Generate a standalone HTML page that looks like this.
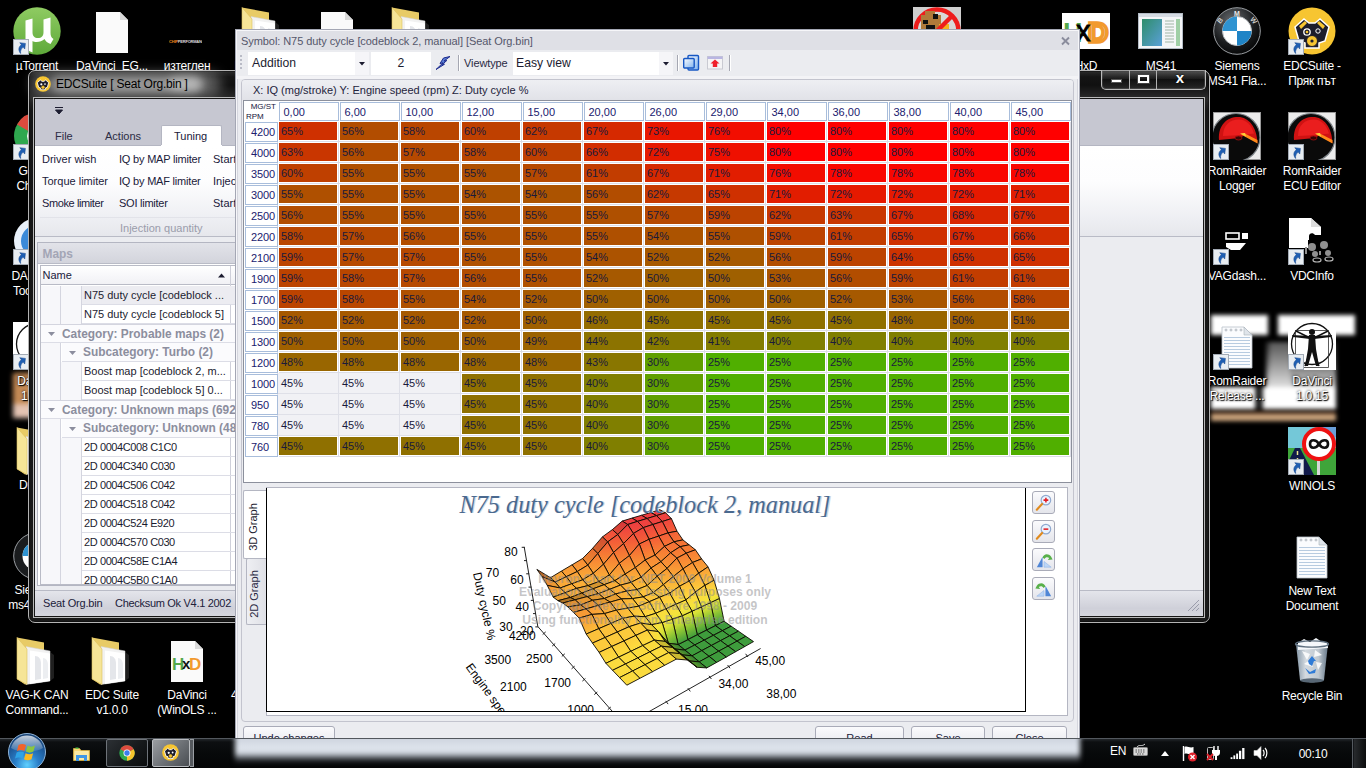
<!DOCTYPE html>
<html lang="en"><head><meta charset="utf-8"><title>EDCSuite - N75 duty cycle</title>
<style>
*{box-sizing:border-box;margin:0;padding:0}
html,body{width:1366px;height:768px;overflow:hidden;background:#000}
body{position:relative;font-family:"Liberation Sans",sans-serif;font-size:11px;color:#1c1c30}
.abs,.ico,.lbl,.win,#dlg,#task,#grid div,#dlg div,.win div,#task div{position:absolute}
svg{position:absolute;overflow:visible}
/* desktop */
.lbl{width:90px;text-align:center;color:#fff;font-size:12px;line-height:15px;letter-spacing:-.25px;text-shadow:1px 1px 1px #000,0 0 3px #000;white-space:nowrap}
.sc{position:absolute;width:12px;height:12px;background:#e9eef3;border:1px solid #9aa3ad}
/* main window */
.win{left:28px;top:70px;width:1182px;height:553px;border-radius:7px;border:1px solid #b4b4b4;background:linear-gradient(#2b2b2b,#141414 6px,#101010 14px,#242424 24px,#2a2a2a 27px,#161616 40px,#1a1a1a);box-shadow:inset 0 0 0 1px rgba(0,0,0,.35)}
.win .client{left:5px;top:27px;width:1170px;height:519px;background:#ebecf0;border:1px solid #161616;box-shadow:0 0 0 1px #b9b9b9;overflow:hidden}
.t11{font-size:11px;white-space:nowrap;color:#20203a}
.trow{left:0;width:440px;height:19px;border-bottom:1px solid #dcdde6;line-height:18px;white-space:nowrap;color:#1c1c30}
.gr{font-weight:bold;color:#8c8e9e;font-size:11.9px}
/* dialog */
#dlg{left:235px;top:29px;width:845px;height:720px;background:#ebecf0;border:1px solid #a4a7b4;box-shadow:inset 0 0 0 1px #f6f6f9,inset 0 0 0 2px #d5d6de}
#grid{position:absolute;left:7px;top:70px;width:829px;height:383px;border:1px solid #8c909c;overflow:hidden;background:repeating-linear-gradient(90deg,transparent 0,transparent 33px,#dcdde6 33px,#dcdde6 34px,transparent 34px,transparent 61px) 0 21px/100% 335px no-repeat,repeating-linear-gradient(180deg,transparent 0,transparent 19px,#dcdde6 19px,#dcdde6 20px,transparent 20px,transparent 21px) 35px 21px/794px 336px no-repeat,#fff}
#grid .ch{top:1px;width:60px;height:19px;border:1px solid #a8bddb;background:#fff;color:#20206e;line-height:18.500px;padding-left:3.500px}
#grid .rh{left:1px;width:33px;height:20px;border:1px solid #a8bddb;background:#fff;color:#20206e;line-height:18.500px;text-align:left;padding-left:5px;letter-spacing:-.15px}
#grid .c{width:58px;height:18px;line-height:19px;padding-left:2px;color:#1a1a3c;white-space:nowrap}
#grid .c.sel{width:61px;height:21px;background:#f1f1f5;border-right:1px solid #dfe0e8;border-bottom:1px solid #dfe0e8;padding-left:3px;line-height:21px}
#grid .corner{left:1px;top:0;width:34px;height:21px;font-size:8px;line-height:9.5px;text-align:right;padding:1px 3px 0 0;color:#15153a}
#grid .corner span{display:block;text-align:left;padding-left:1px}
.btn{border:1px solid #a9abb8;border-radius:3px;background:linear-gradient(#fbfbfd,#e4e5eb);text-align:center;color:#20203a}
.sep{width:1px;background:#a5a7b2;box-shadow:1px 0 0 #fff}
/* taskbar */
#task{left:0;top:738px;width:1366px;height:30px;background:linear-gradient(#23272b,#0d0f11 3px,#07090a 50%,#040506);border-top:1px solid #52575d}
</style></head><body>
<div class="abs" style="left:1208px;top:306px;width:158px;height:124px;overflow:hidden;filter:blur(2.2px)"><div class="abs" style="left:3px;top:9px;width:57px;height:20px;background:#fff"></div><div class="abs" style="left:70px;top:9px;width:77px;height:20px;background:#fff"></div><div class="abs" style="left:58px;top:36px;width:70px;height:46px;background:linear-gradient(#2e2e2e,#6a6a6a 45%,#d9d9d9)"></div><div class="abs" style="left:62px;top:36px;width:20px;height:46px;background:linear-gradient(#555,#e2e2e2)"></div><div class="abs" style="left:3px;top:81px;width:125px;height:22px;background:#fff"></div><div class="abs" style="left:47px;top:81px;width:8px;height:22px;background:#222"></div><div class="abs" style="left:3px;top:105px;width:125px;height:3px;background:#4a2e1c"></div><div class="abs" style="left:3px;top:108px;width:125px;height:7px;background:#caa37c"></div></div>
<div class="abs" style="left:4px;top:366px;width:40px;height:60px;overflow:hidden;filter:blur(2.5px)"><div class="abs" style="left:9px;top:7px;width:30px;height:34px;background:#c48a55"></div><div class="abs" style="left:9px;top:38px;width:30px;height:14px;background:#e3c3b2"></div></div>
<svg style="left:13px;top:7px" width="48" height="48" viewBox="0 0 48 48"><defs><linearGradient id="ut" x1="0" y1="0" x2="0" y2="1"><stop offset="0" stop-color="#8fcb62"/><stop offset="1" stop-color="#5ea93a"/></linearGradient></defs><circle cx="24" cy="24" r="23.700" fill="url(#ut)"/><path d="M12.500 13.500l7-2v13.500c0 4 2 6 5.500 6s5.500-2 5.500-6V12.500l7-2v15c0 3 .5 5 3 6.500l-3 5c-3-1-5-3-6-5-2 2-5 3-8 3-1.500 0-3-.3-4-1v11.500l-7-3z" fill="#fff"/></svg>
<svg style="left:13px;top:39px" width="16" height="16" viewBox="0 0 16 16"><rect x=".5" y=".5" width="15" height="15" fill="#e8edf2" stroke="#a3abb5"/><path d="M4 13c0-4 2-6.5 6-6.5V4l4 4-4 4V9.5C7.5 9.500 5.500 10.500 4 13z" fill="#1f5fb3" stroke="#174a90" stroke-width=".5" transform="rotate(-38 8 8.500)"/></svg>
<div class="lbl" style="left:-8px;top:59px">µTorrent</div>
<svg style="left:88px;top:7px" width="48" height="48" viewBox="0 0 48 48"><path d="M8 5h24l8 8v33H8z" fill="#fafafa"/><path d="M32 5v8h8z" fill="#d9d9d9"/></svg>
<div class="lbl" style="left:67px;top:59px">DaVinci_EG...</div>
<div class="abs" style="left:169px;top:39px;width:33px;height:6px;font-size:4px;line-height:6px;color:#e88b1e;font-weight:bold;letter-spacing:-.2px;white-space:nowrap;overflow:hidden">CHIP<span style="color:#ddd">PERFORMANCE</span></div>
<div class="lbl" style="left:142px;top:59px">изтеглен</div>
<svg style="left:238px;top:7px" width="48" height="48" viewBox="0 0 48 48"><path d="M4 .5L31 5.500V42l-19 5.500L4 42z" fill="#e8cb66"/><path d="M13 9.500l24 4.500v30l-24 3.500z" fill="#f2f2f2" stroke="#d0d0d0" stroke-width=".5"/><path d="M17 13.500l20 3v27.500l-20 3z" fill="#fff"/><path d="M22 19c4 0 6 3 6 8v15l-6 1z" fill="#e4e6ea"/><path d="M30 21c3 0 5 3 5 7v13l-5 1z" fill="#eceef1"/><path d="M4 .5l10 11.500v35.500L4 42z" fill="#f6e597" stroke="#dcc05c" stroke-width=".6"/><path d="M37 15l4 3v23l-4 3z" fill="#444" opacity=".45"/></svg>
<div class="lbl" style="left:217px;top:59px">New folder</div>
<svg style="left:313px;top:7px" width="48" height="48" viewBox="0 0 48 48"><path d="M8 5h24l8 8v33H8z" fill="#fafafa"/><path d="M32 5v8h8z" fill="#d9d9d9"/></svg>
<div class="lbl" style="left:292px;top:59px">dump.bin</div>
<svg style="left:388px;top:7px" width="48" height="48" viewBox="0 0 48 48"><path d="M4 .5L31 5.500V42l-19 5.500L4 42z" fill="#e8cb66"/><path d="M13 9.500l24 4.500v30l-24 3.500z" fill="#f2f2f2" stroke="#d0d0d0" stroke-width=".5"/><path d="M17 13.500l20 3v27.500l-20 3z" fill="#fff"/><path d="M22 19c4 0 6 3 6 8v15l-6 1z" fill="#e4e6ea"/><path d="M30 21c3 0 5 3 5 7v13l-5 1z" fill="#eceef1"/><path d="M4 .5l10 11.500v35.500L4 42z" fill="#f6e597" stroke="#dcc05c" stroke-width=".6"/><path d="M37 15l4 3v23l-4 3z" fill="#444" opacity=".45"/></svg>
<div class="lbl" style="left:367px;top:59px">Maps</div>
<svg style="left:913px;top:7px" width="48" height="48" viewBox="0 0 48 48"><rect width="48" height="48" fill="#cfcfcf"/><circle cx="24" cy="24" r="21.500" fill="#d8d8d8" stroke="#ee1c1c" stroke-width="4.500"/><rect x="8" y="8" width="20" height="18" fill="#b07a3a"/><rect x="12" y="4" width="10" height="6" fill="#b07a3a"/><rect x="20" y="7" width="5" height="5" fill="#111"/><rect x="10" y="13" width="5" height="4" fill="#111"/><rect x="13" y="18" width="9" height="4" fill="#111"/><rect x="26" y="17" width="10" height="8" fill="#f4b21e"/><path d="M8 40L40 8" stroke="#ee1c1c" stroke-width="4.500"/></svg>
<svg style="left:1062px;top:7px" width="48" height="48" viewBox="0 0 48 48"><rect y="6" width="48" height="36" fill="#fff"/><text x="1" y="35" font-family="Liberation Sans,sans-serif" font-size="27" font-weight="bold" fill="#55a84a">H</text><text x="26" y="35" font-family="Liberation Sans,sans-serif" font-size="28" font-weight="bold" fill="#d8d8d8" stroke="#f29a2e" stroke-width="3.500">D</text><text x="14" y="34" font-family="Liberation Sans,sans-serif" font-size="29" fill="#000" stroke="#000" stroke-width=".8">x</text></svg>
<div class="lbl" style="left:1041px;top:59px">HxD</div>
<svg style="left:1137px;top:7px" width="48" height="48" viewBox="0 0 48 48"><defs><linearGradient id="ms" x1="0" y1="0" x2="1" y2="1"><stop offset="0" stop-color="#2e8d6a"/><stop offset="1" stop-color="#5aa0d8"/></linearGradient></defs><rect x="1.500" y="6.500" width="44" height="35" fill="#f4f6f8" stroke="#b4bcc6"/><rect x="2" y="7" width="43" height="3" fill="#d5dbe3"/><rect x="5" y="12" width="20" height="27" fill="url(#ms)"/><g stroke="#9fb6a6" stroke-width="1.200"><path d="M28 14h9M28 17h9M28 20h9M28 23h9M28 26h9M28 29h9M28 32h9M28 35h9"/></g><rect x="39" y="12" width="4" height="27" fill="#9fcfa6"/></svg>
<div class="lbl" style="left:1116px;top:59px">MS41</div>
<svg style="left:1213px;top:7px" width="48" height="48" viewBox="0 0 48 48"><defs><radialGradient id="bm" cx=".4" cy=".3" r=".8"><stop offset="0" stop-color="#6a6e72"/><stop offset=".6" stop-color="#1a1c1e"/><stop offset="1" stop-color="#000"/></radialGradient></defs><circle cx="24" cy="24" r="23.300" fill="url(#bm)" stroke="#9a9ea2" stroke-width="1"/><circle cx="24" cy="24" r="14.500" fill="#fff" stroke="#b9bdc1" stroke-width="1"/><path d="M24 24V9.500A14.500 14.500 0 0 0 9.500 24z" fill="#2f93d1"/><path d="M24 24v14.500A14.500 14.500 0 0 0 38.500 24z" fill="#1f84c6"/><text x="24" y="9" text-anchor="middle" font-family="Liberation Sans,sans-serif" font-size="7" font-weight="bold" fill="#e8e8e8">M</text><text x="9" y="15" text-anchor="middle" font-family="Liberation Sans,sans-serif" font-size="7" font-weight="bold" fill="#d0d0d0" transform="rotate(-50 9 15)">B</text><text x="39" y="15" text-anchor="middle" font-family="Liberation Sans,sans-serif" font-size="7" font-weight="bold" fill="#d0d0d0" transform="rotate(50 39 15)">W</text></svg>
<div class="lbl" style="left:1192px;top:59px">Siemens</div>
<div class="lbl" style="left:1192px;top:74px">MS41 Fla...</div>
<svg style="left:1288px;top:7px" width="48" height="48" viewBox="0 0 48 48"><circle cx="24" cy="24" r="23.500" fill="#f7c531"/><path d="M7 20l9-8 5 4h6l5-4 9 8-4 14-6 2v5H17v-5l-6-2z" fill="#1d1d2b" stroke="#fff" stroke-width="1.500"/><path d="M11 19l6-5 2 2-6 6zM37 19l-6-5-2 2 6 6z" fill="#f7c531"/><circle cx="19" cy="25" r="3.200" fill="#1d1d2b" stroke="#fff" stroke-width="1.300"/><circle cx="19" cy="25" r="1.300" fill="#f7c531"/><circle cx="30" cy="24" r="2.200" fill="#1d1d2b" stroke="#fff" stroke-width="1"/><circle cx="24" cy="34" r="5.500" fill="#f7c531" stroke="#1d1d2b" stroke-width="1"/><circle cx="24" cy="34" r="1.600" fill="#1d1d2b"/></svg>
<svg style="left:1288px;top:39px" width="16" height="16" viewBox="0 0 16 16"><rect x=".5" y=".5" width="15" height="15" fill="#e8edf2" stroke="#a3abb5"/><path d="M4 13c0-4 2-6.5 6-6.5V4l4 4-4 4V9.5C7.5 9.500 5.500 10.500 4 13z" fill="#1f5fb3" stroke="#174a90" stroke-width=".5" transform="rotate(-38 8 8.500)"/></svg>
<div class="lbl" style="left:1267px;top:59px">EDCSuite -</div>
<div class="lbl" style="left:1267px;top:74px">Пряк път</div>
<svg style="left:1213px;top:112px;overflow:hidden" width="48" height="48" viewBox="0 0 48 48"><rect x=".5" y=".5" width="47" height="47" fill="#ececec" stroke="#9a9a9a"/><circle cx="23" cy="25.500" r="24" fill="#0a0a0a" stroke="#7d8388" stroke-width="1.200"/><path d="M6 28C5 13 14 5 25 5c11 0 19 10.500 19.500 26L31 23.500 27 26z" fill="#cf1212"/><path d="M10 24C10 13 17 7.500 26 7.500c7 0 12.500 5.500 15 14l-12 1.500z" fill="#f02222" opacity=".8"/><path d="M28 22.500l16.500 9v-3.500L31 21z" fill="#ff8a1a"/><path d="M27 21.500l6 3-1-3.500z" fill="#ffd23a"/><ellipse cx="25.500" cy="26" rx="3.500" ry="2" fill="#3a0505" stroke="#a01010" stroke-width=".8"/></svg>
<svg style="left:1213px;top:144px" width="16" height="16" viewBox="0 0 16 16"><rect x=".5" y=".5" width="15" height="15" fill="#e8edf2" stroke="#a3abb5"/><path d="M4 13c0-4 2-6.5 6-6.5V4l4 4-4 4V9.5C7.5 9.500 5.500 10.500 4 13z" fill="#1f5fb3" stroke="#174a90" stroke-width=".5" transform="rotate(-38 8 8.500)"/></svg>
<div class="lbl" style="left:1192px;top:164px">RomRaider</div>
<div class="lbl" style="left:1192px;top:179px">Logger</div>
<svg style="left:1288px;top:112px;overflow:hidden" width="48" height="48" viewBox="0 0 48 48"><rect x=".5" y=".5" width="47" height="47" fill="#ececec" stroke="#9a9a9a"/><circle cx="23" cy="25.500" r="24" fill="#0a0a0a" stroke="#7d8388" stroke-width="1.200"/><path d="M6 28C5 13 14 5 25 5c11 0 19 10.500 19.500 26L31 23.500 27 26z" fill="#cf1212"/><path d="M10 24C10 13 17 7.500 26 7.500c7 0 12.500 5.500 15 14l-12 1.500z" fill="#f02222" opacity=".8"/><path d="M28 22.500l16.500 9v-3.500L31 21z" fill="#ff8a1a"/><path d="M27 21.500l6 3-1-3.500z" fill="#ffd23a"/><ellipse cx="25.500" cy="26" rx="3.500" ry="2" fill="#3a0505" stroke="#a01010" stroke-width=".8"/></svg>
<svg style="left:1288px;top:144px" width="16" height="16" viewBox="0 0 16 16"><rect x=".5" y=".5" width="15" height="15" fill="#e8edf2" stroke="#a3abb5"/><path d="M4 13c0-4 2-6.5 6-6.5V4l4 4-4 4V9.5C7.5 9.500 5.500 10.500 4 13z" fill="#1f5fb3" stroke="#174a90" stroke-width=".5" transform="rotate(-38 8 8.500)"/></svg>
<div class="lbl" style="left:1267px;top:164px">RomRaider</div>
<div class="lbl" style="left:1267px;top:179px">ECU Editor</div>
<svg style="left:1213px;top:217px" width="48" height="48" viewBox="0 0 48 48"><rect x="13" y="16" width="13" height="6" fill="none" stroke="#fff" stroke-width="1.600"/><rect x="29" y="16" width="6" height="6" fill="#fff"/><path d="M13 26h20l-6 7h-9l-5-3z" fill="#fff"/></svg>
<svg style="left:1213px;top:249px" width="16" height="16" viewBox="0 0 16 16"><rect x=".5" y=".5" width="15" height="15" fill="#e8edf2" stroke="#a3abb5"/><path d="M4 13c0-4 2-6.5 6-6.5V4l4 4-4 4V9.5C7.5 9.500 5.500 10.500 4 13z" fill="#1f5fb3" stroke="#174a90" stroke-width=".5" transform="rotate(-38 8 8.500)"/></svg>
<div class="lbl" style="left:1192px;top:269px">VAGdash...</div>
<svg style="left:1288px;top:217px" width="48" height="48" viewBox="0 0 48 48"><path d="M1 1h22l10 9v8h-6c-2-3-6-2-6 1v4h-8c1 4-4 6-5 2H1z" fill="#fff"/><path d="M23 1v9h10z" fill="#ddd"/><path d="M1 20h6c1 4 6 3 5-1h8v12H1z" fill="#fff"/><g fill="#8f8f8f"><circle cx="24" cy="30" r="4"/><circle cx="36" cy="28" r="4"/><circle cx="27" cy="37" r="3"/><circle cx="40" cy="36" r="3"/><rect x="17" y="30" width="2" height="7"/><rect x="31" y="34" width="2" height="4"/></g><ellipse cx="29" cy="43" rx="4" ry="2" fill="none" stroke="#bbb" stroke-width="1.200"/><ellipse cx="41" cy="42" rx="4" ry="2" fill="none" stroke="#bbb" stroke-width="1.200"/></svg>
<svg style="left:1288px;top:249px" width="16" height="16" viewBox="0 0 16 16"><rect x=".5" y=".5" width="15" height="15" fill="#e8edf2" stroke="#a3abb5"/><path d="M4 13c0-4 2-6.5 6-6.5V4l4 4-4 4V9.5C7.5 9.500 5.500 10.500 4 13z" fill="#1f5fb3" stroke="#174a90" stroke-width=".5" transform="rotate(-38 8 8.500)"/></svg>
<div class="lbl" style="left:1267px;top:269px">VDCInfo</div>
<svg style="left:1213px;top:322px" width="48" height="48" viewBox="0 0 48 48"><path d="M9 5h22l8 8v33H9z" fill="#fbfcfe" stroke="#b9c0c9" stroke-width=".8"/><path d="M31 5v8h8z" fill="#dfe4ea" stroke="#aab1ba" stroke-width=".6"/><g stroke="#b7cbe0" stroke-width="1"><path d="M11 15.500h26M11 18.500h26M11 21.500h26M11 24.500h26M11 27.500h26M11 30.500h26M11 33.500h26M11 36.500h26M11 39.500h26M11 42.500h26"/></g><g fill="none" stroke="#9aa2ac" stroke-width=".7"><circle cx="13" cy="8" r="1"/><circle cx="18" cy="8" r="1"/><circle cx="23" cy="8" r="1"/><circle cx="28" cy="8" r="1"/></g></svg>
<svg style="left:1213px;top:354px" width="16" height="16" viewBox="0 0 16 16"><rect x=".5" y=".5" width="15" height="15" fill="#e8edf2" stroke="#a3abb5"/><path d="M4 13c0-4 2-6.5 6-6.5V4l4 4-4 4V9.5C7.5 9.500 5.500 10.500 4 13z" fill="#1f5fb3" stroke="#174a90" stroke-width=".5" transform="rotate(-38 8 8.500)"/></svg>
<div class="lbl" style="left:1192px;top:374px">RomRaider</div>
<div class="lbl" style="left:1192px;top:389px">Release ...</div>
<svg style="left:1288px;top:322px" width="48" height="48" viewBox="0 0 48 48"><rect width="48" height="48" fill="#fff"/><circle cx="24" cy="22" r="20.500" fill="none" stroke="#111" stroke-width="1.300"/><rect x="7.500" y="8.500" width="33" height="37" fill="none" stroke="#333" stroke-width=".8"/><circle cx="24" cy="10" r="3" fill="#111"/><path d="M21 13h6l1 14 3 17h-3l-4-14-4 14h-3l3-17z" fill="#111"/><path d="M4 13l18 1v3L5 15zM44 13l-18 1v3l17-2z" fill="#111"/><path d="M8 9l14 7M40 9l-14 7M17 44l5-14M31 44l-5-14" stroke="#111" stroke-width="1.500" fill="none"/></svg>
<svg style="left:1288px;top:354px" width="16" height="16" viewBox="0 0 16 16"><rect x=".5" y=".5" width="15" height="15" fill="#e8edf2" stroke="#a3abb5"/><path d="M4 13c0-4 2-6.5 6-6.5V4l4 4-4 4V9.5C7.5 9.500 5.500 10.500 4 13z" fill="#1f5fb3" stroke="#174a90" stroke-width=".5" transform="rotate(-38 8 8.500)"/></svg>
<div class="lbl" style="left:1267px;top:374px">DaVinci</div>
<div class="lbl" style="left:1267px;top:389px">1.0.15</div>
<svg style="left:1288px;top:427px;overflow:hidden" width="48" height="48" viewBox="0 0 48 48"><rect width="48" height="22" fill="#74c8d8"/><rect x="30" width="18" height="10" fill="#6a9fd8"/><rect y="21" width="48" height="27" fill="#3fa53a"/><path d="M7 21h5l14 27H-6z" fill="#111a4a"/><path d="M9.500 24v4M9.500 31v5" stroke="#f0e68c" stroke-width="1.500"/><rect x="29" y="32" width="3" height="16" fill="#d8d8d8"/><circle cx="31" cy="17" r="15" fill="#fff" stroke="#ee1111" stroke-width="4"/><path d="M31 17c-3-5-9-5-9 0s6 5 9 0c3-5 9-5 9 0s-6 5-9 0z" fill="none" stroke="#111" stroke-width="2.600"/></svg>
<svg style="left:1288px;top:459px" width="16" height="16" viewBox="0 0 16 16"><rect x=".5" y=".5" width="15" height="15" fill="#e8edf2" stroke="#a3abb5"/><path d="M4 13c0-4 2-6.5 6-6.5V4l4 4-4 4V9.5C7.5 9.500 5.500 10.500 4 13z" fill="#1f5fb3" stroke="#174a90" stroke-width=".5" transform="rotate(-38 8 8.500)"/></svg>
<div class="lbl" style="left:1267px;top:479px">WINOLS</div>
<svg style="left:1288px;top:532px" width="48" height="48" viewBox="0 0 48 48"><path d="M9 5h22l8 8v33H9z" fill="#fbfcfe" stroke="#b9c0c9" stroke-width=".8"/><path d="M31 5v8h8z" fill="#dfe4ea" stroke="#aab1ba" stroke-width=".6"/><g stroke="#b7cbe0" stroke-width="1"><path d="M11 15.500h26M11 18.500h26M11 21.500h26M11 24.500h26M11 27.500h26M11 30.500h26M11 33.500h26M11 36.500h26M11 39.500h26M11 42.500h26"/></g><g fill="none" stroke="#9aa2ac" stroke-width=".7"><circle cx="13" cy="8" r="1"/><circle cx="18" cy="8" r="1"/><circle cx="23" cy="8" r="1"/><circle cx="28" cy="8" r="1"/></g></svg>
<div class="lbl" style="left:1267px;top:584px">New Text</div>
<div class="lbl" style="left:1267px;top:599px">Document</div>
<svg style="left:1288px;top:637px" width="48" height="48" viewBox="0 0 48 48"><defs><linearGradient id="rb" x1="0" y1="0" x2="1" y2="0"><stop offset="0" stop-color="#8fa3b5"/><stop offset=".3" stop-color="#e6edf3"/><stop offset=".7" stop-color="#cfd9e2"/><stop offset="1" stop-color="#6f8294"/></linearGradient></defs><path d="M8 7h32l-4 36c-4 3-20 3-24 0z" fill="url(#rb)" opacity=".92"/><path d="M10 6l6-4 6 3 6-4 6 4 5 0 1 6-30 2z" fill="#f5f8fb"/><ellipse cx="24" cy="7" rx="16.500" ry="3.200" fill="none" stroke="#5d6e7e" stroke-width="1.300"/><path d="M14 14l8 3-3 6zM27 13l7 5-8 2zM16 27l6-4 3 7zM28 25l6 1-4 7z" fill="#fff" opacity=".85"/><path d="M20 24l4-5 4 5-2 0-2 5-3-2zM17 31l5 4 6-3-1 4-6 1z" fill="#2f7bd6"/><ellipse cx="24" cy="43.500" rx="12" ry="2.200" fill="#586775"/></svg>
<div class="lbl" style="left:1267px;top:689px">Recycle Bin</div>
<svg style="left:13px;top:112px" width="48" height="48" viewBox="0 0 48 48"><circle cx="24" cy="24" r="23" fill="#2fa84f"/><path d="M24 24L4 12.500A23 23 0 0 1 44 12.500z" fill="#dd4b3e"/><path d="M24 24l20-11.500A23 23 0 0 1 24 47z" fill="#f7c52d"/><circle cx="24" cy="24" r="10" fill="#fff"/><circle cx="24" cy="24" r="8" fill="#3b7ded"/></svg>
<svg style="left:13px;top:144px" width="16" height="16" viewBox="0 0 16 16"><rect x=".5" y=".5" width="15" height="15" fill="#e8edf2" stroke="#a3abb5"/><path d="M4 13c0-4 2-6.5 6-6.5V4l4 4-4 4V9.5C7.5 9.500 5.500 10.500 4 13z" fill="#1f5fb3" stroke="#174a90" stroke-width=".5" transform="rotate(-38 8 8.500)"/></svg>
<div class="lbl" style="left:-8px;top:164px">Google</div>
<div class="lbl" style="left:-8px;top:179px">Chrome</div>
<svg style="left:13px;top:217px" width="48" height="48" viewBox="0 0 48 48"><circle cx="24" cy="24" r="23" fill="#e9f1fa"/><circle cx="24" cy="24" r="16" fill="#3b8ad8"/><path d="M22 6l10 16h-8l4 18-12-20h8z" fill="#fff"/></svg>
<svg style="left:13px;top:249px" width="16" height="16" viewBox="0 0 16 16"><rect x=".5" y=".5" width="15" height="15" fill="#e8edf2" stroke="#a3abb5"/><path d="M4 13c0-4 2-6.5 6-6.5V4l4 4-4 4V9.5C7.5 9.500 5.500 10.500 4 13z" fill="#1f5fb3" stroke="#174a90" stroke-width=".5" transform="rotate(-38 8 8.500)"/></svg>
<div class="lbl" style="left:-8px;top:269px">DAEMON</div>
<div class="lbl" style="left:-8px;top:284px">Tools Lite</div>
<svg style="left:13px;top:322px" width="48" height="48" viewBox="0 0 48 48"><rect width="48" height="48" fill="#fff"/><circle cx="24" cy="22" r="20.500" fill="none" stroke="#111" stroke-width="1.300"/><path d="M21 13h6l1 14 3 17h-3l-4-14-4 14h-3l3-17z" fill="#111"/></svg>
<svg style="left:13px;top:354px" width="16" height="16" viewBox="0 0 16 16"><rect x=".5" y=".5" width="15" height="15" fill="#e8edf2" stroke="#a3abb5"/><path d="M4 13c0-4 2-6.5 6-6.5V4l4 4-4 4V9.5C7.5 9.500 5.500 10.500 4 13z" fill="#1f5fb3" stroke="#174a90" stroke-width=".5" transform="rotate(-38 8 8.500)"/></svg>
<div class="lbl" style="left:-8px;top:374px">DaVinci</div>
<div class="lbl" style="left:-8px;top:389px">1.0.10</div>
<svg style="left:13px;top:427px" width="48" height="48" viewBox="0 0 48 48"><path d="M4 .5L31 5.500V42l-19 5.500L4 42z" fill="#e8cb66"/><path d="M13 9.500l24 4.500v30l-24 3.500z" fill="#f2f2f2" stroke="#d0d0d0" stroke-width=".5"/><path d="M17 13.500l20 3v27.500l-20 3z" fill="#fff"/><path d="M22 19c4 0 6 3 6 8v15l-6 1z" fill="#e4e6ea"/><path d="M30 21c3 0 5 3 5 7v13l-5 1z" fill="#eceef1"/><path d="M4 .5l10 11.500v35.500L4 42z" fill="#f6e597" stroke="#dcc05c" stroke-width=".6"/><path d="M37 15l4 3v23l-4 3z" fill="#444" opacity=".45"/></svg>
<div class="lbl" style="left:-8px;top:478px">Drivers</div>
<svg style="left:13px;top:532px" width="48" height="48" viewBox="0 0 48 48"><circle cx="24" cy="24" r="23.300" fill="#1a1c1e" stroke="#9a9ea2"/><circle cx="24" cy="24" r="14.500" fill="#fff"/><path d="M24 24V9.500A14.500 14.500 0 0 0 9.500 24z" fill="#2f93d1"/><path d="M24 24v14.500A14.500 14.500 0 0 0 38.500 24z" fill="#1f84c6"/></svg>
<div class="lbl" style="left:-8px;top:583px">Siemens</div>
<div class="lbl" style="left:-8px;top:598px">ms41 rea...</div>
<svg style="left:13px;top:637px" width="48" height="48" viewBox="0 0 48 48"><path d="M4 .5L31 5.500V42l-19 5.500L4 42z" fill="#e8cb66"/><path d="M13 9.500l24 4.500v30l-24 3.500z" fill="#f2f2f2" stroke="#d0d0d0" stroke-width=".5"/><path d="M17 13.500l20 3v27.500l-20 3z" fill="#fff"/><path d="M22 19c4 0 6 3 6 8v15l-6 1z" fill="#e4e6ea"/><path d="M30 21c3 0 5 3 5 7v13l-5 1z" fill="#eceef1"/><path d="M4 .5l10 11.500v35.500L4 42z" fill="#f6e597" stroke="#dcc05c" stroke-width=".6"/><path d="M37 15l4 3v23l-4 3z" fill="#444" opacity=".45"/></svg>
<div class="lbl" style="left:-8px;top:688px">VAG-K CAN</div>
<div class="lbl" style="left:-8px;top:703px">Command...</div>
<svg style="left:88px;top:637px" width="48" height="48" viewBox="0 0 48 48"><path d="M4 .5L31 5.500V42l-19 5.500L4 42z" fill="#e8cb66"/><path d="M13 9.500l24 4.500v30l-24 3.500z" fill="#f2f2f2" stroke="#d0d0d0" stroke-width=".5"/><path d="M17 13.500l20 3v27.500l-20 3z" fill="#fff"/><path d="M22 19c4 0 6 3 6 8v15l-6 1z" fill="#e4e6ea"/><path d="M30 21c3 0 5 3 5 7v13l-5 1z" fill="#eceef1"/><path d="M4 .5l10 11.500v35.500L4 42z" fill="#f6e597" stroke="#dcc05c" stroke-width=".6"/><path d="M37 15l4 3v23l-4 3z" fill="#444" opacity=".45"/></svg>
<div class="lbl" style="left:67px;top:688px">EDC Suite</div>
<div class="lbl" style="left:67px;top:703px">v1.0.0</div>
<svg style="left:163px;top:637px" width="48" height="48" viewBox="0 0 48 48"><path d="M8 4h24l8 8v33H8z" fill="#fafafa"/><path d="M32 4v8h8z" fill="#d9d9d9"/><text x="9" y="33" font-family="Liberation Sans,sans-serif" font-size="17" font-weight="bold" fill="#55a84a">H</text><text x="19" y="32" font-family="Liberation Sans,sans-serif" font-size="15" font-weight="bold" fill="#111">x</text><text x="26" y="33" font-family="Liberation Sans,sans-serif" font-size="17" font-weight="bold" fill="#f29a2e">D</text></svg>
<div class="lbl" style="left:142px;top:688px">DaVinci</div>
<div class="lbl" style="left:142px;top:703px">(WinOLS ...</div>
<div class="lbl" style="left:231px;top:688px;text-align:left">4.51 Tuning</div>
<div class="win">
 <!-- glass glow behind title -->
 <div style="left:2px;top:1px;width:190px;height:24px;border-radius:12px;background:rgba(255,255,255,.3);filter:blur(6px)"></div><div style="left:22px;top:5px;width:150px;height:17px;border-radius:9px;background:rgba(255,255,255,.38);filter:blur(4px)"></div><div style="left:140px;top:5px;width:36px;height:15px;border-radius:8px;background:rgba(255,255,255,.3);filter:blur(4px)"></div>
 <svg style="left:6px;top:5px" width="16" height="16" viewBox="0 0 48 48"><circle cx="24" cy="24" r="23.500" fill="#f7c531"/><path d="M7 20l9-8 5 4h6l5-4 9 8-4 14-6 2v5H17v-5l-6-2z" fill="#1d1d2b" stroke="#fff" stroke-width="2.500"/><circle cx="19" cy="25" r="3.200" fill="#fff"/><circle cx="30" cy="24" r="2.600" fill="#fff"/><circle cx="24" cy="34" r="5.500" fill="#f7c531" stroke="#1d1d2b" stroke-width="1"/></svg>
 <div style="left:27px;top:5px;font-size:12px;line-height:16px;color:#000;letter-spacing:-.2px;white-space:nowrap">EDCSuite [ Seat Org.bin ]</div>
 <!-- caption buttons -->
 <div style="left:1072px;top:-1px;width:105px;height:20px;border:1px solid #b9b9b9;border-top:none;border-radius:0 0 5px 5px;background:linear-gradient(rgba(120,120,120,.55),rgba(40,40,40,.5) 45%,rgba(15,15,15,.6) 50%,rgba(60,60,60,.5));box-shadow:inset 0 0 0 1px rgba(255,255,255,.12)">
  <div style="left:27px;top:0;width:1px;height:19px;background:#b0b0b0"></div>
  <div style="left:54px;top:0;width:1px;height:19px;background:#b0b0b0"></div>
  <div style="left:9px;top:9px;width:11px;height:4px;background:#fff;border:1px solid #555"></div>
  <div style="left:36px;top:5px;width:11px;height:8px;border:2px solid #fff;box-shadow:0 0 0 1px #444"></div>
  <div style="left:69px;top:-1px;width:18px;font:bold 15px/17px 'Liberation Sans',sans-serif;color:#fff;text-shadow:0 0 2px #000;text-align:center">x</div>
 </div>
 <div class="client"><div style="left:1px;top:-1px;width:1167px;height:518px">
  <!-- QAT + tabs strip -->
  <div style="left:-1px;top:0;width:1169px;height:47px;background:#c6c7d1"></div>
  <svg style="left:18px;top:9px" width="10" height="8" viewBox="0 0 10 8"><path d="M1 .5h8M1.500 3h7L5 7z" stroke="#1c1c30" stroke-width="1" fill="#1c1c30"/></svg>
  <div class="t11" style="left:19px;top:32px;color:#2c2c44">File</div>
  <div class="t11" style="left:69px;top:32px;color:#2c2c44">Actions</div>
  <div style="left:125px;top:27px;width:61px;height:21px;background:#fff;border:1px solid #b4b6c2;border-bottom:none;border-radius:2px 2px 0 0"></div>
  <div class="t11" style="left:138px;top:32px">Tuning</div>
  <!-- ribbon panel -->
  <div style="left:-1px;top:47px;width:1169px;height:92px;background:linear-gradient(#fff,#fdfdfe 40%,#eeeff3 80%,#e6e7ec);border-top:1px solid #b4b6c2;border-bottom:1px solid #b9bbc6"></div>
  <div style="left:125px;top:47px;width:61px;height:1px;background:#fff"></div>
  <div class="t11" style="left:6px;top:55px">Driver wish</div>
  <div class="t11" style="left:6px;top:77px">Torque limiter</div>
  <div class="t11" style="left:6px;top:99px;letter-spacing:-.4px">Smoke limiter</div>
  <div class="t11" style="left:83px;top:55px;letter-spacing:-.2px">IQ by MAP limiter</div>
  <div class="t11" style="left:83px;top:77px;letter-spacing:-.2px">IQ by MAF limiter</div>
  <div class="t11" style="left:83px;top:99px;letter-spacing:-.25px">SOI limiter</div>
  <div class="t11" style="left:177px;top:55px">Start of injection</div>
  <div class="t11" style="left:177px;top:77px">Injector duration</div>
  <div class="t11" style="left:177px;top:99px">Start of injection limiter</div>
  <div style="left:4px;top:119px;width:330px;height:1px;background:#e2e3e9"></div>
  <div class="t11" style="left:84px;top:124px;color:#9a9cab">Injection quantity</div>
  <!-- Maps dock panel -->
  <div style="left:1px;top:144px;width:453px;height:344px;border:1px solid #b4b6c2;background:#fff"></div>
  <div style="left:2px;top:145px;width:451px;height:21px;background:linear-gradient(#e2e3e9,#d3d4dc);border-bottom:1px solid #b9bbc6"></div>
  <div style="left:6.500px;top:149px;font-weight:bold;font-size:11.900px;color:#a3a5b5;white-space:nowrap">Maps</div>
  <div style="left:4px;top:167px;width:447px;height:320px;border:1px solid #b9bbc6;background:#fff;overflow:hidden">
   <div style="left:0;top:0;width:446px;height:19px;background:linear-gradient(#fff,#f1f1f5);border-bottom:1px solid #b9bbc6"></div>
   <div class="t11" style="left:1.500px;top:3px">Name</div>
   <svg style="left:177px;top:7px" width="7" height="5" viewBox="0 0 7 5"><path d="M0 4.500L3.500 .5 7 4.500z" fill="#1c1c30"/></svg>
   <div style="left:189px;top:0;width:1px;height:420px;background:#cfd0da"></div>
   <!-- rows: origin y=20 => screen 285 -->
   <div style="left:0;top:20px;width:20px;height:38px;border-right:1px solid #d4d5df;background:#f7f7fa"></div>
   <div style="left:20px;top:20px;width:21px;height:38px;border-right:1px solid #d4d5df;background:#f7f7fa"></div>
   <div class="trow" style="left:41px;top:20px;background:#ececf1;padding-left:2px">N75 duty cycle [codeblock ...</div>
   <div class="trow" style="left:41px;top:39px;padding-left:2px">N75 duty cycle [codeblock 5]</div>
   <div class="trow gr" style="top:58px;padding-left:21px;border-top:1px solid #d4d5df;background:#fbfbfd">Category: Probable maps (2)</div>
   <svg style="left:7px;top:66px" width="7" height="4" viewBox="0 0 7 4"><path d="M0 0h7L3.500 4z" fill="#8c8e9e"/></svg>
   <div style="left:0;top:77px;width:20px;height:57px;border-right:1px solid #d4d5df;background:#f7f7fa"></div>
   <div class="trow gr" style="left:21px;top:77px;padding-left:21px;background:#fbfbfd">Subcategory: Turbo (2)</div>
   <svg style="left:28px;top:85px" width="7" height="4" viewBox="0 0 7 4"><path d="M0 0h7L3.500 4z" fill="#8c8e9e"/></svg>
   <div style="left:20px;top:96px;width:21px;height:38px;border-right:1px solid #d4d5df;background:#f7f7fa"></div>
   <div class="trow" style="left:41px;top:96px;padding-left:2px">Boost map [codeblock 2, m...</div>
   <div class="trow" style="left:41px;top:115px;padding-left:2px">Boost map [codeblock 5] 0...</div>
   <div class="trow gr" style="top:134px;padding-left:21px;border-top:1px solid #d4d5df;background:#fbfbfd">Category: Unknown maps (692)</div>
   <svg style="left:7px;top:142px" width="7" height="4" viewBox="0 0 7 4"><path d="M0 0h7L3.500 4z" fill="#8c8e9e"/></svg>
   <div style="left:0;top:153px;width:20px;height:270px;border-right:1px solid #d4d5df;background:#f7f7fa"></div>
   <div class="trow gr" style="left:21px;top:153px;padding-left:21px;background:#fbfbfd">Subcategory: Unknown (486)</div>
   <svg style="left:28px;top:161px" width="7" height="4" viewBox="0 0 7 4"><path d="M0 0h7L3.500 4z" fill="#8c8e9e"/></svg>
   <div style="left:20px;top:172px;width:21px;height:250px;border-right:1px solid #d4d5df;background:#f7f7fa"></div>
   <div class="trow" style="left:41px;top:172px;padding-left:2px;letter-spacing:-.4px">2D 0004C008 C1C0</div>
   <div class="trow" style="left:41px;top:191px;padding-left:2px;letter-spacing:-.4px">2D 0004C340 C030</div>
   <div class="trow" style="left:41px;top:210px;padding-left:2px;letter-spacing:-.4px">2D 0004C506 C042</div>
   <div class="trow" style="left:41px;top:229px;padding-left:2px;letter-spacing:-.4px">2D 0004C518 C042</div>
   <div class="trow" style="left:41px;top:248px;padding-left:2px;letter-spacing:-.4px">2D 0004C524 E920</div>
   <div class="trow" style="left:41px;top:267px;padding-left:2px;letter-spacing:-.4px">2D 0004C570 C030</div>
   <div class="trow" style="left:41px;top:286px;padding-left:2px;letter-spacing:-.4px">2D 0004C58E C1A4</div>
   <div class="trow" style="left:41px;top:305px;padding-left:2px;letter-spacing:-.4px">2D 0004C5B0 C1A0</div>
  </div>
  <!-- status bar -->
  <div style="left:-1px;top:492px;width:1169px;height:26px;background:linear-gradient(#e4e5eb,#cfd0d9 70%,#d6d7df);border-top:1px solid #b9bbc6"></div>
  <div class="t11" style="left:7px;top:499px;letter-spacing:-.2px">Seat Org.bin</div>
  <div class="t11" style="left:79px;top:499px;letter-spacing:-.3px">Checksum Ok V4.1 2002</div>
  <svg style="left:1151px;top:501px" width="12" height="12" viewBox="0 0 12 12"><path d="M1 12L12 1M5 12l7-7M9 12l3-3" stroke="#9a9cab" stroke-width="1"/></svg>
 </div></div>
</div>
<div id="dlg">
 <div style="left:1px;top:1px;width:841px;height:19px;background:#dfe0e6"></div>
 <div style="left:5px;top:5px;color:#55576b;white-space:nowrap;letter-spacing:-.07px">Symbol: N75 duty cycle [codeblock 2, manual] [Seat Org.bin]</div>
 <svg style="left:825px;top:7px" width="9" height="8" viewBox="0 0 9 8"><path d="M1 .5l7 7M8 .5l-7 7" stroke="#8a8c9c" stroke-width="1.900"/></svg>
 <!-- toolbar -->
 <div style="left:1px;top:20px;width:841px;height:26px;background:#ebecf0"></div>
 <div style="left:1px;top:46px;width:841px;height:3px;background:#f3f3f6"></div>
 <div style="left:4px;top:25px;width:2px;height:2px;background:#b9bbc6;box-shadow:0 4px 0 #b9bbc6,0 8px 0 #b9bbc6,0 12px 0 #b9bbc6"></div>
 <div style="left:12px;top:22px;width:121px;height:23px;background:#fff"></div>
 <div style="left:119px;top:22px;width:14px;height:23px;background:#f5f5f8"></div>
 <div style="left:16px;top:25px;font-size:12.200px;line-height:16px;color:#1c1c30;white-space:nowrap">Addition</div>
 <svg style="left:123px;top:32px" width="6" height="4" viewBox="0 0 6 4"><path d="M0 0h6L3 3.500z" fill="#1c1c30"/></svg>
 <div style="left:135px;top:22px;width:60px;height:23px;background:#fff;font-size:12.200px;line-height:22px;text-align:center;color:#1c1c30">2</div>
 <svg style="left:199px;top:25px" width="16" height="16" viewBox="0 0 16 16"><path d="M15 1.500L8.500 3 5 8.500l3-.6L1 14.500 9.500 9.200l-2.200.2L11.800 5.500 9 6z" fill="#5b7fd6" stroke="#1c2a8c" stroke-width="1"/></svg>
 <div class="sep" style="left:222px;top:25px;height:16px"></div>
 <div style="left:228px;top:27px;color:#2a2a44;white-space:nowrap;letter-spacing:-.1px">Viewtype</div>
 <div style="left:277px;top:22px;width:160px;height:23px;background:#fff"></div>
 <div style="left:423px;top:22px;width:14px;height:23px;background:#f5f5f8"></div>
 <div style="left:280px;top:25px;font-size:12.200px;line-height:16px;color:#1c1c30;white-space:nowrap">Easy view</div>
 <svg style="left:427px;top:32px" width="6" height="4" viewBox="0 0 6 4"><path d="M0 0h6L3 3.500z" fill="#1c1c30"/></svg>
 <div class="sep" style="left:441px;top:25px;height:16px"></div>
 <svg style="left:446px;top:24px" width="18" height="18" viewBox="0 0 18 18"><defs><linearGradient id="wb" x1="0" y1="0" x2="1" y2="1"><stop offset="0" stop-color="#fff"/><stop offset="1" stop-color="#7fb2ee"/></linearGradient></defs><rect x="6" y="1.500" width="10.500" height="14.500" rx="1" fill="url(#wb)" stroke="#1858c4" stroke-width="1.400"/><rect x="1.700" y="4.500" width="10.500" height="9.500" rx="1" fill="url(#wb)" stroke="#1858c4" stroke-width="1.400"/></svg>
 <svg style="left:471px;top:26px" width="16" height="14" viewBox="0 0 16 14"><rect x=".5" y=".5" width="15" height="12.500" fill="#f4f4f6" stroke="#c9cad2"/><rect x=".5" y=".5" width="15" height="2.500" fill="#b9b6e2"/><path d="M8 3.500l4.500 4h-2.300v3.500H5.800V7.500H3.500z" fill="#f0202c"/></svg>
 <div class="sep" style="left:493px;top:25px;height:16px"></div>
 <!-- group panel -->
 <div style="left:5px;top:49px;width:833px;height:643px;border:1px solid #c3c4ce;border-radius:4px;background:#ebecf0"></div>
 <div style="left:6px;top:50px;width:831px;height:20px;border-radius:3px 3px 0 0;background:linear-gradient(#eeeff3,#e1e2e8)"></div>
 <div style="left:17px;top:54px;color:#24243c;white-space:nowrap">X: IQ (mg/stroke) Y: Engine speed (rpm) Z: Duty cycle %</div>
<div id="grid">
<div class="corner">MG/ST<br><span>RPM</span></div>
<div class="ch" style="left:35px">0,00</div>
<div class="ch" style="left:96px">6,00</div>
<div class="ch" style="left:157px">10,00</div>
<div class="ch" style="left:218px">12,00</div>
<div class="ch" style="left:279px">15,00</div>
<div class="ch" style="left:340px">20,00</div>
<div class="ch" style="left:401px">26,00</div>
<div class="ch" style="left:462px">29,00</div>
<div class="ch" style="left:523px">34,00</div>
<div class="ch" style="left:584px">36,00</div>
<div class="ch" style="left:645px">38,00</div>
<div class="ch" style="left:706px">40,00</div>
<div class="ch" style="left:767px">45,00</div>
<div class="rh" style="top:21px">4200</div>
<div class="c" style="left:35px;top:21px;background:rgb(207,48,0)">65%</div>
<div class="c" style="left:96px;top:21px;background:rgb(178,77,0)">56%</div>
<div class="c" style="left:157px;top:21px;background:rgb(185,70,0)">58%</div>
<div class="c" style="left:218px;top:21px;background:rgb(191,64,0)">60%</div>
<div class="c" style="left:279px;top:21px;background:rgb(198,57,0)">62%</div>
<div class="c" style="left:340px;top:21px;background:rgb(214,41,0)">67%</div>
<div class="c" style="left:401px;top:21px;background:rgb(233,22,0)">73%</div>
<div class="c" style="left:462px;top:21px;background:rgb(242,13,0)">76%</div>
<div class="c" style="left:523px;top:21px;background:rgb(255,0,0)">80%</div>
<div class="c" style="left:584px;top:21px;background:rgb(255,0,0)">80%</div>
<div class="c" style="left:645px;top:21px;background:rgb(255,0,0)">80%</div>
<div class="c" style="left:706px;top:21px;background:rgb(255,0,0)">80%</div>
<div class="c" style="left:767px;top:21px;background:rgb(255,0,0)">80%</div>
<div class="rh" style="top:42px">4000</div>
<div class="c" style="left:35px;top:42px;background:rgb(201,54,0)">63%</div>
<div class="c" style="left:96px;top:42px;background:rgb(178,77,0)">56%</div>
<div class="c" style="left:157px;top:42px;background:rgb(182,73,0)">57%</div>
<div class="c" style="left:218px;top:42px;background:rgb(185,70,0)">58%</div>
<div class="c" style="left:279px;top:42px;background:rgb(191,64,0)">60%</div>
<div class="c" style="left:340px;top:42px;background:rgb(210,45,0)">66%</div>
<div class="c" style="left:401px;top:42px;background:rgb(230,25,0)">72%</div>
<div class="c" style="left:462px;top:42px;background:rgb(239,16,0)">75%</div>
<div class="c" style="left:523px;top:42px;background:rgb(255,0,0)">80%</div>
<div class="c" style="left:584px;top:42px;background:rgb(255,0,0)">80%</div>
<div class="c" style="left:645px;top:42px;background:rgb(255,0,0)">80%</div>
<div class="c" style="left:706px;top:42px;background:rgb(255,0,0)">80%</div>
<div class="c" style="left:767px;top:42px;background:rgb(255,0,0)">80%</div>
<div class="rh" style="top:63px">3500</div>
<div class="c" style="left:35px;top:63px;background:rgb(191,64,0)">60%</div>
<div class="c" style="left:96px;top:63px;background:rgb(175,80,0)">55%</div>
<div class="c" style="left:157px;top:63px;background:rgb(175,80,0)">55%</div>
<div class="c" style="left:218px;top:63px;background:rgb(175,80,0)">55%</div>
<div class="c" style="left:279px;top:63px;background:rgb(182,73,0)">57%</div>
<div class="c" style="left:340px;top:63px;background:rgb(194,61,0)">61%</div>
<div class="c" style="left:401px;top:63px;background:rgb(214,41,0)">67%</div>
<div class="c" style="left:462px;top:63px;background:rgb(226,29,0)">71%</div>
<div class="c" style="left:523px;top:63px;background:rgb(242,13,0)">76%</div>
<div class="c" style="left:584px;top:63px;background:rgb(249,6,0)">78%</div>
<div class="c" style="left:645px;top:63px;background:rgb(249,6,0)">78%</div>
<div class="c" style="left:706px;top:63px;background:rgb(249,6,0)">78%</div>
<div class="c" style="left:767px;top:63px;background:rgb(249,6,0)">78%</div>
<div class="rh" style="top:84px">3000</div>
<div class="c" style="left:35px;top:84px;background:rgb(175,80,0)">55%</div>
<div class="c" style="left:96px;top:84px;background:rgb(175,80,0)">55%</div>
<div class="c" style="left:157px;top:84px;background:rgb(175,80,0)">55%</div>
<div class="c" style="left:218px;top:84px;background:rgb(172,83,0)">54%</div>
<div class="c" style="left:279px;top:84px;background:rgb(172,83,0)">54%</div>
<div class="c" style="left:340px;top:84px;background:rgb(178,77,0)">56%</div>
<div class="c" style="left:401px;top:84px;background:rgb(198,57,0)">62%</div>
<div class="c" style="left:462px;top:84px;background:rgb(207,48,0)">65%</div>
<div class="c" style="left:523px;top:84px;background:rgb(226,29,0)">71%</div>
<div class="c" style="left:584px;top:84px;background:rgb(230,25,0)">72%</div>
<div class="c" style="left:645px;top:84px;background:rgb(230,25,0)">72%</div>
<div class="c" style="left:706px;top:84px;background:rgb(230,25,0)">72%</div>
<div class="c" style="left:767px;top:84px;background:rgb(226,29,0)">71%</div>
<div class="rh" style="top:105px">2500</div>
<div class="c" style="left:35px;top:105px;background:rgb(178,77,0)">56%</div>
<div class="c" style="left:96px;top:105px;background:rgb(175,80,0)">55%</div>
<div class="c" style="left:157px;top:105px;background:rgb(175,80,0)">55%</div>
<div class="c" style="left:218px;top:105px;background:rgb(175,80,0)">55%</div>
<div class="c" style="left:279px;top:105px;background:rgb(175,80,0)">55%</div>
<div class="c" style="left:340px;top:105px;background:rgb(175,80,0)">55%</div>
<div class="c" style="left:401px;top:105px;background:rgb(182,73,0)">57%</div>
<div class="c" style="left:462px;top:105px;background:rgb(188,67,0)">59%</div>
<div class="c" style="left:523px;top:105px;background:rgb(198,57,0)">62%</div>
<div class="c" style="left:584px;top:105px;background:rgb(201,54,0)">63%</div>
<div class="c" style="left:645px;top:105px;background:rgb(214,41,0)">67%</div>
<div class="c" style="left:706px;top:105px;background:rgb(217,38,0)">68%</div>
<div class="c" style="left:767px;top:105px;background:rgb(214,41,0)">67%</div>
<div class="rh" style="top:126px">2200</div>
<div class="c" style="left:35px;top:126px;background:rgb(185,70,0)">58%</div>
<div class="c" style="left:96px;top:126px;background:rgb(182,73,0)">57%</div>
<div class="c" style="left:157px;top:126px;background:rgb(178,77,0)">56%</div>
<div class="c" style="left:218px;top:126px;background:rgb(175,80,0)">55%</div>
<div class="c" style="left:279px;top:126px;background:rgb(175,80,0)">55%</div>
<div class="c" style="left:340px;top:126px;background:rgb(175,80,0)">55%</div>
<div class="c" style="left:401px;top:126px;background:rgb(172,83,0)">54%</div>
<div class="c" style="left:462px;top:126px;background:rgb(175,80,0)">55%</div>
<div class="c" style="left:523px;top:126px;background:rgb(188,67,0)">59%</div>
<div class="c" style="left:584px;top:126px;background:rgb(194,61,0)">61%</div>
<div class="c" style="left:645px;top:126px;background:rgb(207,48,0)">65%</div>
<div class="c" style="left:706px;top:126px;background:rgb(214,41,0)">67%</div>
<div class="c" style="left:767px;top:126px;background:rgb(210,45,0)">66%</div>
<div class="rh" style="top:147px">2100</div>
<div class="c" style="left:35px;top:147px;background:rgb(188,67,0)">59%</div>
<div class="c" style="left:96px;top:147px;background:rgb(182,73,0)">57%</div>
<div class="c" style="left:157px;top:147px;background:rgb(182,73,0)">57%</div>
<div class="c" style="left:218px;top:147px;background:rgb(175,80,0)">55%</div>
<div class="c" style="left:279px;top:147px;background:rgb(175,80,0)">55%</div>
<div class="c" style="left:340px;top:147px;background:rgb(172,83,0)">54%</div>
<div class="c" style="left:401px;top:147px;background:rgb(166,89,0)">52%</div>
<div class="c" style="left:462px;top:147px;background:rgb(166,89,0)">52%</div>
<div class="c" style="left:523px;top:147px;background:rgb(178,77,0)">56%</div>
<div class="c" style="left:584px;top:147px;background:rgb(188,67,0)">59%</div>
<div class="c" style="left:645px;top:147px;background:rgb(204,51,0)">64%</div>
<div class="c" style="left:706px;top:147px;background:rgb(207,48,0)">65%</div>
<div class="c" style="left:767px;top:147px;background:rgb(207,48,0)">65%</div>
<div class="rh" style="top:168px">1900</div>
<div class="c" style="left:35px;top:168px;background:rgb(188,67,0)">59%</div>
<div class="c" style="left:96px;top:168px;background:rgb(185,70,0)">58%</div>
<div class="c" style="left:157px;top:168px;background:rgb(182,73,0)">57%</div>
<div class="c" style="left:218px;top:168px;background:rgb(178,77,0)">56%</div>
<div class="c" style="left:279px;top:168px;background:rgb(175,80,0)">55%</div>
<div class="c" style="left:340px;top:168px;background:rgb(166,89,0)">52%</div>
<div class="c" style="left:401px;top:168px;background:rgb(159,96,0)">50%</div>
<div class="c" style="left:462px;top:168px;background:rgb(159,96,0)">50%</div>
<div class="c" style="left:523px;top:168px;background:rgb(169,86,0)">53%</div>
<div class="c" style="left:584px;top:168px;background:rgb(178,77,0)">56%</div>
<div class="c" style="left:645px;top:168px;background:rgb(188,67,0)">59%</div>
<div class="c" style="left:706px;top:168px;background:rgb(194,61,0)">61%</div>
<div class="c" style="left:767px;top:168px;background:rgb(194,61,0)">61%</div>
<div class="rh" style="top:189px">1700</div>
<div class="c" style="left:35px;top:189px;background:rgb(188,67,0)">59%</div>
<div class="c" style="left:96px;top:189px;background:rgb(185,70,0)">58%</div>
<div class="c" style="left:157px;top:189px;background:rgb(175,80,0)">55%</div>
<div class="c" style="left:218px;top:189px;background:rgb(172,83,0)">54%</div>
<div class="c" style="left:279px;top:189px;background:rgb(166,89,0)">52%</div>
<div class="c" style="left:340px;top:189px;background:rgb(159,96,0)">50%</div>
<div class="c" style="left:401px;top:189px;background:rgb(159,96,0)">50%</div>
<div class="c" style="left:462px;top:189px;background:rgb(159,96,0)">50%</div>
<div class="c" style="left:523px;top:189px;background:rgb(159,96,0)">50%</div>
<div class="c" style="left:584px;top:189px;background:rgb(166,89,0)">52%</div>
<div class="c" style="left:645px;top:189px;background:rgb(169,86,0)">53%</div>
<div class="c" style="left:706px;top:189px;background:rgb(178,77,0)">56%</div>
<div class="c" style="left:767px;top:189px;background:rgb(185,70,0)">58%</div>
<div class="rh" style="top:210px">1500</div>
<div class="c" style="left:35px;top:210px;background:rgb(166,89,0)">52%</div>
<div class="c" style="left:96px;top:210px;background:rgb(166,89,0)">52%</div>
<div class="c" style="left:157px;top:210px;background:rgb(166,89,0)">52%</div>
<div class="c" style="left:218px;top:210px;background:rgb(166,89,0)">52%</div>
<div class="c" style="left:279px;top:210px;background:rgb(159,96,0)">50%</div>
<div class="c" style="left:340px;top:210px;background:rgb(147,108,0)">46%</div>
<div class="c" style="left:401px;top:210px;background:rgb(143,112,0)">45%</div>
<div class="c" style="left:462px;top:210px;background:rgb(143,112,0)">45%</div>
<div class="c" style="left:523px;top:210px;background:rgb(143,112,0)">45%</div>
<div class="c" style="left:584px;top:210px;background:rgb(143,112,0)">45%</div>
<div class="c" style="left:645px;top:210px;background:rgb(153,102,0)">48%</div>
<div class="c" style="left:706px;top:210px;background:rgb(159,96,0)">50%</div>
<div class="c" style="left:767px;top:210px;background:rgb(163,92,0)">51%</div>
<div class="rh" style="top:231px">1300</div>
<div class="c" style="left:35px;top:231px;background:rgb(159,96,0)">50%</div>
<div class="c" style="left:96px;top:231px;background:rgb(159,96,0)">50%</div>
<div class="c" style="left:157px;top:231px;background:rgb(159,96,0)">50%</div>
<div class="c" style="left:218px;top:231px;background:rgb(159,96,0)">50%</div>
<div class="c" style="left:279px;top:231px;background:rgb(156,99,0)">49%</div>
<div class="c" style="left:340px;top:231px;background:rgb(140,115,0)">44%</div>
<div class="c" style="left:401px;top:231px;background:rgb(134,121,0)">42%</div>
<div class="c" style="left:462px;top:231px;background:rgb(131,124,0)">41%</div>
<div class="c" style="left:523px;top:231px;background:rgb(128,127,0)">40%</div>
<div class="c" style="left:584px;top:231px;background:rgb(128,127,0)">40%</div>
<div class="c" style="left:645px;top:231px;background:rgb(128,127,0)">40%</div>
<div class="c" style="left:706px;top:231px;background:rgb(128,127,0)">40%</div>
<div class="c" style="left:767px;top:231px;background:rgb(128,127,0)">40%</div>
<div class="rh" style="top:252px">1200</div>
<div class="c" style="left:35px;top:252px;background:rgb(153,102,0)">48%</div>
<div class="c" style="left:96px;top:252px;background:rgb(153,102,0)">48%</div>
<div class="c" style="left:157px;top:252px;background:rgb(153,102,0)">48%</div>
<div class="c" style="left:218px;top:252px;background:rgb(153,102,0)">48%</div>
<div class="c" style="left:279px;top:252px;background:rgb(153,102,0)">48%</div>
<div class="c" style="left:340px;top:252px;background:rgb(137,118,0)">43%</div>
<div class="c" style="left:401px;top:252px;background:rgb(96,159,0)">30%</div>
<div class="c" style="left:462px;top:252px;background:rgb(80,175,0)">25%</div>
<div class="c" style="left:523px;top:252px;background:rgb(80,175,0)">25%</div>
<div class="c" style="left:584px;top:252px;background:rgb(80,175,0)">25%</div>
<div class="c" style="left:645px;top:252px;background:rgb(80,175,0)">25%</div>
<div class="c" style="left:706px;top:252px;background:rgb(80,175,0)">25%</div>
<div class="c" style="left:767px;top:252px;background:rgb(80,175,0)">25%</div>
<div class="rh" style="top:273px">1000</div>
<div class="c sel" style="left:34px;top:272px">45%</div>
<div class="c sel" style="left:95px;top:272px">45%</div>
<div class="c sel" style="left:156px;top:272px">45%</div>
<div class="c" style="left:218px;top:273px;background:rgb(143,112,0)">45%</div>
<div class="c" style="left:279px;top:273px;background:rgb(143,112,0)">45%</div>
<div class="c" style="left:340px;top:273px;background:rgb(128,127,0)">40%</div>
<div class="c" style="left:401px;top:273px;background:rgb(96,159,0)">30%</div>
<div class="c" style="left:462px;top:273px;background:rgb(80,175,0)">25%</div>
<div class="c" style="left:523px;top:273px;background:rgb(80,175,0)">25%</div>
<div class="c" style="left:584px;top:273px;background:rgb(80,175,0)">25%</div>
<div class="c" style="left:645px;top:273px;background:rgb(80,175,0)">25%</div>
<div class="c" style="left:706px;top:273px;background:rgb(80,175,0)">25%</div>
<div class="c" style="left:767px;top:273px;background:rgb(80,175,0)">25%</div>
<div class="rh" style="top:294px">950</div>
<div class="c sel" style="left:34px;top:293px">45%</div>
<div class="c sel" style="left:95px;top:293px">45%</div>
<div class="c sel" style="left:156px;top:293px">45%</div>
<div class="c" style="left:218px;top:294px;background:rgb(143,112,0)">45%</div>
<div class="c" style="left:279px;top:294px;background:rgb(143,112,0)">45%</div>
<div class="c" style="left:340px;top:294px;background:rgb(128,127,0)">40%</div>
<div class="c" style="left:401px;top:294px;background:rgb(96,159,0)">30%</div>
<div class="c" style="left:462px;top:294px;background:rgb(80,175,0)">25%</div>
<div class="c" style="left:523px;top:294px;background:rgb(80,175,0)">25%</div>
<div class="c" style="left:584px;top:294px;background:rgb(80,175,0)">25%</div>
<div class="c" style="left:645px;top:294px;background:rgb(80,175,0)">25%</div>
<div class="c" style="left:706px;top:294px;background:rgb(80,175,0)">25%</div>
<div class="c" style="left:767px;top:294px;background:rgb(80,175,0)">25%</div>
<div class="rh" style="top:315px">780</div>
<div class="c sel" style="left:34px;top:314px">45%</div>
<div class="c sel" style="left:95px;top:314px">45%</div>
<div class="c sel" style="left:156px;top:314px">45%</div>
<div class="c" style="left:218px;top:315px;background:rgb(143,112,0)">45%</div>
<div class="c" style="left:279px;top:315px;background:rgb(143,112,0)">45%</div>
<div class="c" style="left:340px;top:315px;background:rgb(128,127,0)">40%</div>
<div class="c" style="left:401px;top:315px;background:rgb(96,159,0)">30%</div>
<div class="c" style="left:462px;top:315px;background:rgb(80,175,0)">25%</div>
<div class="c" style="left:523px;top:315px;background:rgb(80,175,0)">25%</div>
<div class="c" style="left:584px;top:315px;background:rgb(80,175,0)">25%</div>
<div class="c" style="left:645px;top:315px;background:rgb(80,175,0)">25%</div>
<div class="c" style="left:706px;top:315px;background:rgb(80,175,0)">25%</div>
<div class="c" style="left:767px;top:315px;background:rgb(80,175,0)">25%</div>
<div class="rh" style="top:336px">760</div>
<div class="c" style="left:35px;top:336px;background:rgb(143,112,0)">45%</div>
<div class="c" style="left:96px;top:336px;background:rgb(143,112,0)">45%</div>
<div class="c" style="left:157px;top:336px;background:rgb(143,112,0)">45%</div>
<div class="c" style="left:218px;top:336px;background:rgb(143,112,0)">45%</div>
<div class="c" style="left:279px;top:336px;background:rgb(143,112,0)">45%</div>
<div class="c" style="left:340px;top:336px;background:rgb(128,127,0)">40%</div>
<div class="c" style="left:401px;top:336px;background:rgb(96,159,0)">30%</div>
<div class="c" style="left:462px;top:336px;background:rgb(80,175,0)">25%</div>
<div class="c" style="left:523px;top:336px;background:rgb(80,175,0)">25%</div>
<div class="c" style="left:584px;top:336px;background:rgb(80,175,0)">25%</div>
<div class="c" style="left:645px;top:336px;background:rgb(80,175,0)">25%</div>
<div class="c" style="left:706px;top:336px;background:rgb(80,175,0)">25%</div>
<div class="c" style="left:767px;top:336px;background:rgb(80,175,0)">25%</div>
</div>
 <!-- tab control with chart -->
 <div style="left:30px;top:457px;width:802px;height:229px;background:#fff;border:1px solid #b4b6c2"></div>
 <div style="left:7px;top:460px;width:24px;height:69px;background:#fff;border:1px solid #b4b6c2;border-right:none;border-radius:2px 0 0 2px"></div>
 <div style="left:10px;top:528px;width:20px;height:67px;background:linear-gradient(90deg,#eeeff3,#dfe0e6);border:1px solid #b4b6c2;border-right:none;border-radius:2px 0 0 2px"></div>
 <div style="left:-8px;top:490px;width:50px;height:14px;line-height:14px;text-align:center;transform:rotate(-90deg);color:#1c1c30;white-space:nowrap">3D Graph</div>
 <div style="left:-7px;top:557px;width:50px;height:14px;line-height:14px;text-align:center;transform:rotate(-90deg);color:#2a2a44;white-space:nowrap">2D Graph</div>
 <div style="left:30px;top:458px;width:760px;height:224px;border:1px solid #000;border-top:none;background:#fff;overflow:hidden">
 <svg style="left:-1px;top:0" width="760" height="224" viewBox="0 0 760 224">
<defs><linearGradient id="q1" gradientUnits="userSpaceOnUse" x1="406.4" y1="45.2" x2="401.4" y2="31.8"><stop offset="0%" stop-color="#f46337"/><stop offset="14.3%" stop-color="#f45e38"/><stop offset="100%" stop-color="#f0463e"/></linearGradient><linearGradient id="q2" gradientUnits="userSpaceOnUse" x1="412.6" y1="54.2" x2="406.4" y2="42.6"><stop offset="0%" stop-color="#f67535"/><stop offset="100%" stop-color="#f45e38"/></linearGradient><linearGradient id="q3" gradientUnits="userSpaceOnUse" x1="396.5" y1="46.8" x2="392.5" y2="34.7"><stop offset="0%" stop-color="#f45e38"/><stop offset="100%" stop-color="#f0463e"/></linearGradient><linearGradient id="q4" gradientUnits="userSpaceOnUse" x1="402.1" y1="57.6" x2="398.8" y2="46.1"><stop offset="0%" stop-color="#f67535"/><stop offset="100%" stop-color="#f45e38"/></linearGradient><linearGradient id="q5" gradientUnits="userSpaceOnUse" x1="387" y1="50" x2="383" y2="37.7"><stop offset="0%" stop-color="#f45e38"/><stop offset="100%" stop-color="#f0463e"/></linearGradient><linearGradient id="q6" gradientUnits="userSpaceOnUse" x1="406.1" y1="65.4" x2="406.4" y2="54.4"><stop offset="0%" stop-color="#f77e34"/><stop offset="100%" stop-color="#f67036"/></linearGradient><linearGradient id="q7" gradientUnits="userSpaceOnUse" x1="392.9" y1="66.8" x2="389.5" y2="49.5"><stop offset="0%" stop-color="#f88735"/><stop offset="22.2%" stop-color="#f77e34"/><stop offset="100%" stop-color="#f45e38"/></linearGradient><linearGradient id="q8" gradientUnits="userSpaceOnUse" x1="350.8" y1="46.4" x2="356.6" y2="33.7"><stop offset="0%" stop-color="#db4a35"/><stop offset="100%" stop-color="#d8383a"/></linearGradient><linearGradient id="q9" gradientUnits="userSpaceOnUse" x1="370.6" y1="45.5" x2="368.8" y2="34.7"><stop offset="0%" stop-color="#f14e3c"/><stop offset="100%" stop-color="#ee3e40"/></linearGradient><linearGradient id="q10" gradientUnits="userSpaceOnUse" x1="395.3" y1="73.7" x2="398.3" y2="58.3"><stop offset="0%" stop-color="#f89035"/><stop offset="66.7%" stop-color="#f77e34"/><stop offset="100%" stop-color="#f67535"/></linearGradient><linearGradient id="q11" gradientUnits="userSpaceOnUse" x1="342.3" y1="54" x2="345.9" y2="41.5"><stop offset="0%" stop-color="#f45e38"/><stop offset="100%" stop-color="#f14e3c"/></linearGradient><linearGradient id="q12" gradientUnits="userSpaceOnUse" x1="456.3" y1="134.3" x2="446.4" y2="113.8"><stop offset="0%" stop-color="#3e9c3c"/><stop offset="46.7%" stop-color="#8cc434"/><stop offset="86.7%" stop-color="#d7e137"/><stop offset="100%" stop-color="#e6e23a"/></linearGradient><linearGradient id="q13" gradientUnits="userSpaceOnUse" x1="429.9" y1="73.1" x2="426" y2="63"><stop offset="0%" stop-color="#f89035"/><stop offset="100%" stop-color="#f77e34"/></linearGradient><linearGradient id="q14" gradientUnits="userSpaceOnUse" x1="376.6" y1="55.1" x2="373.7" y2="40"><stop offset="0%" stop-color="#f46337"/><stop offset="14.3%" stop-color="#f45e38"/><stop offset="100%" stop-color="#f0463e"/></linearGradient><linearGradient id="q15" gradientUnits="userSpaceOnUse" x1="412.4" y1="69.4" x2="412.6" y2="58.1"><stop offset="0%" stop-color="#f78334"/><stop offset="33.3%" stop-color="#f77e34"/><stop offset="100%" stop-color="#f67535"/></linearGradient><linearGradient id="q16" gradientUnits="userSpaceOnUse" x1="383.7" y1="70.6" x2="378.5" y2="52.6"><stop offset="0%" stop-color="#f88c35"/><stop offset="30%" stop-color="#f77e34"/><stop offset="100%" stop-color="#f45e38"/></linearGradient><linearGradient id="q17" gradientUnits="userSpaceOnUse" x1="358.9" y1="55.7" x2="360.3" y2="36.3"><stop offset="0%" stop-color="#f46337"/><stop offset="11.1%" stop-color="#f45e38"/><stop offset="100%" stop-color="#ee3e40"/></linearGradient><linearGradient id="q18" gradientUnits="userSpaceOnUse" x1="330.6" y1="64.9" x2="337.7" y2="49.4"><stop offset="0%" stop-color="#d6692e"/><stop offset="85.7%" stop-color="#d45231"/><stop offset="100%" stop-color="#d34e31"/></linearGradient><linearGradient id="q19" gradientUnits="userSpaceOnUse" x1="321" y1="77.1" x2="327" y2="60.8"><stop offset="0%" stop-color="#ea8c32"/><stop offset="71.4%" stop-color="#e87731"/><stop offset="100%" stop-color="#e86e32"/></linearGradient><linearGradient id="q20" gradientUnits="userSpaceOnUse" x1="436" y1="84.9" x2="433" y2="72.3"><stop offset="0%" stop-color="#faa837"/><stop offset="40%" stop-color="#f99e36"/><stop offset="100%" stop-color="#f89035"/></linearGradient><linearGradient id="q21" gradientUnits="userSpaceOnUse" x1="387.7" y1="80.2" x2="386.6" y2="67.8"><stop offset="0%" stop-color="#f99936"/><stop offset="100%" stop-color="#f88735"/></linearGradient><linearGradient id="q22" gradientUnits="userSpaceOnUse" x1="349.9" y1="64.6" x2="349.4" y2="46.8"><stop offset="0%" stop-color="#f67535"/><stop offset="62.5%" stop-color="#f45e38"/><stop offset="100%" stop-color="#f2523b"/></linearGradient><linearGradient id="q23" gradientUnits="userSpaceOnUse" x1="365.1" y1="67.8" x2="365.6" y2="45.6"><stop offset="0%" stop-color="#f77e34"/><stop offset="63.6%" stop-color="#f45e38"/><stop offset="100%" stop-color="#f14e3c"/></linearGradient><linearGradient id="q24" gradientUnits="userSpaceOnUse" x1="449.7" y1="112.2" x2="442.3" y2="94.2"><stop offset="0%" stop-color="#e6e23a"/><stop offset="18.2%" stop-color="#f5e43c"/><stop offset="54.5%" stop-color="#fdd83e"/><stop offset="100%" stop-color="#fbc13b"/></linearGradient><linearGradient id="q25" gradientUnits="userSpaceOnUse" x1="400.5" y1="80.5" x2="404.9" y2="65.3"><stop offset="0%" stop-color="#f99936"/><stop offset="100%" stop-color="#f77e34"/></linearGradient><linearGradient id="q26" gradientUnits="userSpaceOnUse" x1="442.5" y1="96.1" x2="438.1" y2="79.6"><stop offset="0%" stop-color="#fcc53b"/><stop offset="25%" stop-color="#fbbc3a"/><stop offset="100%" stop-color="#f99e36"/></linearGradient><linearGradient id="q27" gradientUnits="userSpaceOnUse" x1="372.2" y1="78.9" x2="370.1" y2="55.9"><stop offset="0%" stop-color="#f99936"/><stop offset="50%" stop-color="#f77e34"/><stop offset="100%" stop-color="#f46337"/></linearGradient><linearGradient id="q28" gradientUnits="userSpaceOnUse" x1="420.2" y1="80.4" x2="417.4" y2="66.1"><stop offset="0%" stop-color="#f99936"/><stop offset="100%" stop-color="#f77e34"/></linearGradient><linearGradient id="q29" gradientUnits="userSpaceOnUse" x1="313.8" y1="83.6" x2="314.1" y2="70.4"><stop offset="0%" stop-color="#f99e36"/><stop offset="100%" stop-color="#f88c35"/></linearGradient><linearGradient id="q30" gradientUnits="userSpaceOnUse" x1="447.5" y1="138.7" x2="437.4" y2="117.9"><stop offset="0%" stop-color="#3e9c3c"/><stop offset="46.7%" stop-color="#8cc434"/><stop offset="86.7%" stop-color="#d7e137"/><stop offset="100%" stop-color="#e6e23a"/></linearGradient><linearGradient id="q31" gradientUnits="userSpaceOnUse" x1="338.9" y1="76.3" x2="340.4" y2="53.8"><stop offset="0%" stop-color="#f89035"/><stop offset="36.4%" stop-color="#f77e34"/><stop offset="100%" stop-color="#f45e38"/></linearGradient><linearGradient id="q32" gradientUnits="userSpaceOnUse" x1="356.1" y1="74.8" x2="354.6" y2="55.7"><stop offset="0%" stop-color="#f88c35"/><stop offset="33.3%" stop-color="#f77e34"/><stop offset="100%" stop-color="#f46337"/></linearGradient><linearGradient id="q33" gradientUnits="userSpaceOnUse" x1="377" y1="89.4" x2="377.4" y2="72.2"><stop offset="0%" stop-color="#faad38"/><stop offset="42.9%" stop-color="#f99e36"/><stop offset="100%" stop-color="#f88c35"/></linearGradient><linearGradient id="q34" gradientUnits="userSpaceOnUse" x1="328.9" y1="84.9" x2="330.5" y2="65"><stop offset="0%" stop-color="#f9a337"/><stop offset="11.1%" stop-color="#f99e36"/><stop offset="88.9%" stop-color="#f77e34"/><stop offset="100%" stop-color="#f77935"/></linearGradient><linearGradient id="q35" gradientUnits="userSpaceOnUse" x1="426.3" y1="92.7" x2="423.6" y2="75.1"><stop offset="0%" stop-color="#fbb739"/><stop offset="62.5%" stop-color="#f99e36"/><stop offset="100%" stop-color="#f89035"/></linearGradient><linearGradient id="q36" gradientUnits="userSpaceOnUse" x1="392.9" y1="88.6" x2="393.2" y2="74.1"><stop offset="0%" stop-color="#faa837"/><stop offset="40%" stop-color="#f99e36"/><stop offset="100%" stop-color="#f89035"/></linearGradient><linearGradient id="q37" gradientUnits="userSpaceOnUse" x1="362.5" y1="85.3" x2="359.9" y2="67.9"><stop offset="0%" stop-color="#f9a337"/><stop offset="12.5%" stop-color="#f99e36"/><stop offset="100%" stop-color="#f77e34"/></linearGradient><linearGradient id="q38" gradientUnits="userSpaceOnUse" x1="344.6" y1="87.1" x2="346.2" y2="64.4"><stop offset="0%" stop-color="#faa837"/><stop offset="18.2%" stop-color="#f99e36"/><stop offset="81.8%" stop-color="#f77e34"/><stop offset="100%" stop-color="#f67535"/></linearGradient><linearGradient id="q39" gradientUnits="userSpaceOnUse" x1="408.9" y1="88.1" x2="409.3" y2="69.6"><stop offset="0%" stop-color="#faa837"/><stop offset="25%" stop-color="#f99e36"/><stop offset="100%" stop-color="#f78334"/></linearGradient><linearGradient id="q40" gradientUnits="userSpaceOnUse" x1="432.3" y1="103.2" x2="429.5" y2="85.4"><stop offset="0%" stop-color="#fccf3d"/><stop offset="50%" stop-color="#fbbc3a"/><stop offset="100%" stop-color="#faa837"/></linearGradient><linearGradient id="q41" gradientUnits="userSpaceOnUse" x1="439.9" y1="116.7" x2="433.5" y2="98.9"><stop offset="0%" stop-color="#e6e23a"/><stop offset="20%" stop-color="#f5e43c"/><stop offset="60%" stop-color="#fdd83e"/><stop offset="100%" stop-color="#fcc53b"/></linearGradient><linearGradient id="q42" gradientUnits="userSpaceOnUse" x1="319.8" y1="91.6" x2="318.8" y2="77.3"><stop offset="0%" stop-color="#faad38"/><stop offset="60%" stop-color="#f99e36"/><stop offset="100%" stop-color="#f89535"/></linearGradient><linearGradient id="q43" gradientUnits="userSpaceOnUse" x1="303.2" y1="88" x2="303.4" y2="76.1"><stop offset="0%" stop-color="#f9a337"/><stop offset="33.3%" stop-color="#f99e36"/><stop offset="100%" stop-color="#f89535"/></linearGradient><linearGradient id="q44" gradientUnits="userSpaceOnUse" x1="335.6" y1="92.8" x2="334.8" y2="75.8"><stop offset="0%" stop-color="#fab239"/><stop offset="57.1%" stop-color="#f99e36"/><stop offset="100%" stop-color="#f89035"/></linearGradient><linearGradient id="q45" gradientUnits="userSpaceOnUse" x1="382.3" y1="97.5" x2="384.1" y2="79.9"><stop offset="0%" stop-color="#fbbc3a"/><stop offset="85.7%" stop-color="#f99e36"/><stop offset="100%" stop-color="#f99936"/></linearGradient><linearGradient id="q46" gradientUnits="userSpaceOnUse" x1="368.1" y1="93.5" x2="366" y2="79.8"><stop offset="0%" stop-color="#fab239"/><stop offset="80%" stop-color="#f99e36"/><stop offset="100%" stop-color="#f99936"/></linearGradient><linearGradient id="q47" gradientUnits="userSpaceOnUse" x1="350.7" y1="91.3" x2="352" y2="74.4"><stop offset="0%" stop-color="#faad38"/><stop offset="42.9%" stop-color="#f99e36"/><stop offset="100%" stop-color="#f88c35"/></linearGradient><linearGradient id="q48" gradientUnits="userSpaceOnUse" x1="416.5" y1="97.1" x2="413.6" y2="80.9"><stop offset="0%" stop-color="#fbbc3a"/><stop offset="85.7%" stop-color="#f99e36"/><stop offset="100%" stop-color="#f99936"/></linearGradient><linearGradient id="q49" gradientUnits="userSpaceOnUse" x1="438.4" y1="143.3" x2="428.2" y2="122.2"><stop offset="0%" stop-color="#3e9c3c"/><stop offset="46.7%" stop-color="#8cc434"/><stop offset="86.7%" stop-color="#d7e137"/><stop offset="100%" stop-color="#e6e23a"/></linearGradient><linearGradient id="q50" gradientUnits="userSpaceOnUse" x1="399" y1="96.6" x2="399.4" y2="80.4"><stop offset="0%" stop-color="#fbb739"/><stop offset="83.3%" stop-color="#f99e36"/><stop offset="100%" stop-color="#f99936"/></linearGradient><linearGradient id="q51" gradientUnits="userSpaceOnUse" x1="423.5" y1="111.6" x2="419.8" y2="94.2"><stop offset="0%" stop-color="#fbdb3e"/><stop offset="12.5%" stop-color="#fdd83e"/><stop offset="87.5%" stop-color="#fbbc3a"/><stop offset="100%" stop-color="#fbb739"/></linearGradient><linearGradient id="q52" gradientUnits="userSpaceOnUse" x1="325.2" y1="95.7" x2="323.7" y2="84.8"><stop offset="0%" stop-color="#fab239"/><stop offset="100%" stop-color="#f9a337"/></linearGradient><linearGradient id="q53" gradientUnits="userSpaceOnUse" x1="429.5" y1="121.3" x2="424.8" y2="104.6"><stop offset="0%" stop-color="#e6e23a"/><stop offset="25%" stop-color="#f5e43c"/><stop offset="75%" stop-color="#fdd83e"/><stop offset="100%" stop-color="#fccf3d"/></linearGradient><linearGradient id="q54" gradientUnits="userSpaceOnUse" x1="374.3" y1="100" x2="371.4" y2="89.6"><stop offset="0%" stop-color="#fbbc3a"/><stop offset="100%" stop-color="#faad38"/></linearGradient><linearGradient id="q55" gradientUnits="userSpaceOnUse" x1="309.5" y1="94.2" x2="307" y2="84.1"><stop offset="0%" stop-color="#faad38"/><stop offset="100%" stop-color="#f99e36"/></linearGradient><linearGradient id="q56" gradientUnits="userSpaceOnUse" x1="388.4" y1="104.3" x2="390.3" y2="87.7"><stop offset="0%" stop-color="#fcc53b"/><stop offset="33.3%" stop-color="#fbbc3a"/><stop offset="100%" stop-color="#faa837"/></linearGradient><linearGradient id="q57" gradientUnits="userSpaceOnUse" x1="405.9" y1="104.5" x2="404.9" y2="88.4"><stop offset="0%" stop-color="#fcc53b"/><stop offset="33.3%" stop-color="#fbbc3a"/><stop offset="100%" stop-color="#faa837"/></linearGradient><linearGradient id="q58" gradientUnits="userSpaceOnUse" x1="357.9" y1="97.8" x2="355.5" y2="85.3"><stop offset="0%" stop-color="#fab239"/><stop offset="100%" stop-color="#f9a337"/></linearGradient><linearGradient id="q59" gradientUnits="userSpaceOnUse" x1="429" y1="148" x2="418.7" y2="126.7"><stop offset="0%" stop-color="#3e9c3c"/><stop offset="46.7%" stop-color="#8cc434"/><stop offset="86.7%" stop-color="#d7e137"/><stop offset="100%" stop-color="#e6e23a"/></linearGradient><linearGradient id="q60" gradientUnits="userSpaceOnUse" x1="413.8" y1="114.5" x2="409" y2="99.2"><stop offset="0%" stop-color="#fbdb3e"/><stop offset="14.3%" stop-color="#fdd83e"/><stop offset="100%" stop-color="#fbbc3a"/></linearGradient><linearGradient id="q61" gradientUnits="userSpaceOnUse" x1="395.5" y1="106.8" x2="395.6" y2="95.2"><stop offset="0%" stop-color="#fcc53b"/><stop offset="66.7%" stop-color="#fbbc3a"/><stop offset="100%" stop-color="#fbb739"/></linearGradient><linearGradient id="q62" gradientUnits="userSpaceOnUse" x1="420.6" y1="125.7" x2="415.3" y2="113.9"><stop offset="0%" stop-color="#e6e23a"/><stop offset="40%" stop-color="#f5e43c"/><stop offset="100%" stop-color="#fbdb3e"/></linearGradient><linearGradient id="q63" gradientUnits="userSpaceOnUse" x1="371.1" y1="103.8" x2="356.8" y2="95.7"><stop offset="0%" stop-color="#fbbc3a"/><stop offset="100%" stop-color="#faad38"/></linearGradient><linearGradient id="q64" gradientUnits="userSpaceOnUse" x1="284.3" y1="86.4" x2="275" y2="91"><stop offset="0%" stop-color="#bc7f2a"/><stop offset="22.2%" stop-color="#bc7729"/><stop offset="100%" stop-color="#ba5f27"/></linearGradient><linearGradient id="q65" gradientUnits="userSpaceOnUse" x1="404.4" y1="118.8" x2="399.2" y2="106.9"><stop offset="0%" stop-color="#fbdb3e"/><stop offset="20%" stop-color="#fdd83e"/><stop offset="100%" stop-color="#fcc53b"/></linearGradient><linearGradient id="q66" gradientUnits="userSpaceOnUse" x1="419.8" y1="152.6" x2="408.2" y2="130.1"><stop offset="0%" stop-color="#3e9c3c"/><stop offset="43.8%" stop-color="#8cc434"/><stop offset="81.2%" stop-color="#d7e137"/><stop offset="100%" stop-color="#eee33b"/></linearGradient><linearGradient id="q67" gradientUnits="userSpaceOnUse" x1="411.8" y1="130.7" x2="405.1" y2="118.5"><stop offset="0%" stop-color="#e6e23a"/><stop offset="40%" stop-color="#f5e43c"/><stop offset="100%" stop-color="#fbdb3e"/></linearGradient><linearGradient id="q68" gradientUnits="userSpaceOnUse" x1="376.6" y1="109.9" x2="360.9" y2="102.1"><stop offset="0%" stop-color="#fcc53b"/><stop offset="50%" stop-color="#fbbc3a"/><stop offset="100%" stop-color="#fab239"/></linearGradient><linearGradient id="q69" gradientUnits="userSpaceOnUse" x1="292.7" y1="94.6" x2="275.4" y2="95.5"><stop offset="0%" stop-color="#eda435"/><stop offset="37.5%" stop-color="#ec9633"/><stop offset="100%" stop-color="#eb8032"/></linearGradient><linearGradient id="q70" gradientUnits="userSpaceOnUse" x1="394.3" y1="123.3" x2="389" y2="111.3"><stop offset="0%" stop-color="#fbdb3e"/><stop offset="20%" stop-color="#fdd83e"/><stop offset="100%" stop-color="#fcc53b"/></linearGradient><linearGradient id="q71" gradientUnits="userSpaceOnUse" x1="412.8" y1="156.9" x2="397.5" y2="134.5"><stop offset="0%" stop-color="#3e9c3c"/><stop offset="41.2%" stop-color="#8cc434"/><stop offset="76.5%" stop-color="#d7e137"/><stop offset="100%" stop-color="#f5e43c"/></linearGradient><linearGradient id="q72" gradientUnits="userSpaceOnUse" x1="412.4" y1="156.7" x2="408.9" y2="160.8"><stop offset="0%" stop-color="#338131"/><stop offset="100%" stop-color="#61982d"/></linearGradient><linearGradient id="q73" gradientUnits="userSpaceOnUse" x1="401.8" y1="134.4" x2="395.2" y2="122.9"><stop offset="0%" stop-color="#eee33b"/><stop offset="25%" stop-color="#f5e43c"/><stop offset="100%" stop-color="#fbdb3e"/></linearGradient><linearGradient id="q74" gradientUnits="userSpaceOnUse" x1="292.9" y1="105.8" x2="283" y2="93.7"><stop offset="0%" stop-color="#faad38"/><stop offset="60%" stop-color="#f99e36"/><stop offset="100%" stop-color="#f89535"/></linearGradient><linearGradient id="q75" gradientUnits="userSpaceOnUse" x1="369.2" y1="108.8" x2="352.4" y2="107.1"><stop offset="0%" stop-color="#fbbc3a"/><stop offset="100%" stop-color="#faad38"/></linearGradient><linearGradient id="q76" gradientUnits="userSpaceOnUse" x1="384.8" y1="128.4" x2="378.3" y2="115.8"><stop offset="0%" stop-color="#fbdb3e"/><stop offset="20%" stop-color="#fdd83e"/><stop offset="100%" stop-color="#fcc53b"/></linearGradient><linearGradient id="q77" gradientUnits="userSpaceOnUse" x1="419.3" y1="162.4" x2="415.8" y2="166.6"><stop offset="0%" stop-color="#338131"/><stop offset="100%" stop-color="#61982d"/></linearGradient><linearGradient id="q78" gradientUnits="userSpaceOnUse" x1="371.5" y1="118.8" x2="355" y2="110.2"><stop offset="0%" stop-color="#fcc53b"/><stop offset="40%" stop-color="#fbbc3a"/><stop offset="100%" stop-color="#faad38"/></linearGradient><linearGradient id="q79" gradientUnits="userSpaceOnUse" x1="394.8" y1="137.4" x2="382.1" y2="126.6"><stop offset="0%" stop-color="#f5e43c"/><stop offset="100%" stop-color="#fdd83e"/></linearGradient><linearGradient id="q80" gradientUnits="userSpaceOnUse" x1="406.2" y1="154" x2="388.9" y2="137.6"><stop offset="0%" stop-color="#76b936"/><stop offset="14.3%" stop-color="#8cc434"/><stop offset="57.1%" stop-color="#d7e137"/><stop offset="85.7%" stop-color="#f5e43c"/><stop offset="100%" stop-color="#f9de3d"/></linearGradient><linearGradient id="q81" gradientUnits="userSpaceOnUse" x1="380.3" y1="129" x2="363.3" y2="120.1"><stop offset="0%" stop-color="#fdd83e"/><stop offset="100%" stop-color="#fbbc3a"/></linearGradient><linearGradient id="q82" gradientUnits="userSpaceOnUse" x1="404.9" y1="152" x2="395.6" y2="155"><stop offset="0%" stop-color="#4a7422"/><stop offset="15.4%" stop-color="#587b21"/><stop offset="61.5%" stop-color="#878d22"/><stop offset="92.3%" stop-color="#9a8f26"/><stop offset="100%" stop-color="#9b8d26"/></linearGradient><linearGradient id="q83" gradientUnits="userSpaceOnUse" x1="426.5" y1="168.3" x2="422.9" y2="172.5"><stop offset="0%" stop-color="#338131"/><stop offset="100%" stop-color="#61982d"/></linearGradient><linearGradient id="q84" gradientUnits="userSpaceOnUse" x1="359.5" y1="123.5" x2="347.8" y2="111.7"><stop offset="0%" stop-color="#fbbc3a"/><stop offset="100%" stop-color="#faa837"/></linearGradient><linearGradient id="q85" gradientUnits="userSpaceOnUse" x1="300.2" y1="110.1" x2="300.8" y2="114.5"><stop offset="0%" stop-color="#ae7927"/><stop offset="100%" stop-color="#ae6e26"/></linearGradient><linearGradient id="q86" gradientUnits="userSpaceOnUse" x1="383.6" y1="129.6" x2="371.2" y2="134.3"><stop offset="0%" stop-color="#f9de3d"/><stop offset="33.3%" stop-color="#fdd83e"/><stop offset="100%" stop-color="#fcc53b"/></linearGradient><linearGradient id="q87" gradientUnits="userSpaceOnUse" x1="407.9" y1="160" x2="407.5" y2="160.4"><stop offset="0%" stop-color="#456c20"/><stop offset="20%" stop-color="#52731f"/><stop offset="80%" stop-color="#7e8420"/><stop offset="100%" stop-color="#878522"/></linearGradient><linearGradient id="q88" gradientUnits="userSpaceOnUse" x1="367.5" y1="129.3" x2="350.8" y2="121"><stop offset="0%" stop-color="#fcc53b"/><stop offset="50%" stop-color="#fbbc3a"/><stop offset="100%" stop-color="#fab239"/></linearGradient><linearGradient id="q89" gradientUnits="userSpaceOnUse" x1="433.9" y1="174.3" x2="430.3" y2="178.7"><stop offset="0%" stop-color="#338131"/><stop offset="100%" stop-color="#61982d"/></linearGradient><linearGradient id="q90" gradientUnits="userSpaceOnUse" x1="387.5" y1="136.6" x2="379.4" y2="142.1"><stop offset="0%" stop-color="#e5d138"/><stop offset="50%" stop-color="#ebc839"/><stop offset="100%" stop-color="#eabb38"/></linearGradient><linearGradient id="q91" gradientUnits="userSpaceOnUse" x1="346.2" y1="125.6" x2="336.3" y2="114"><stop offset="0%" stop-color="#fab239"/><stop offset="100%" stop-color="#f9a337"/></linearGradient><linearGradient id="q92" gradientUnits="userSpaceOnUse" x1="372.3" y1="136.4" x2="356.2" y2="128.3"><stop offset="0%" stop-color="#fcca3c"/><stop offset="100%" stop-color="#fbbc3a"/></linearGradient><linearGradient id="q93" gradientUnits="userSpaceOnUse" x1="415.1" y1="166" x2="414.7" y2="166.5"><stop offset="0%" stop-color="#456c20"/><stop offset="20%" stop-color="#52731f"/><stop offset="80%" stop-color="#7e8420"/><stop offset="100%" stop-color="#878522"/></linearGradient><linearGradient id="q94" gradientUnits="userSpaceOnUse" x1="399" y1="147.5" x2="381.5" y2="148.1"><stop offset="0%" stop-color="#e6e23a"/><stop offset="25%" stop-color="#f5e43c"/><stop offset="75%" stop-color="#fdd83e"/><stop offset="100%" stop-color="#fccf3d"/></linearGradient><linearGradient id="q95" gradientUnits="userSpaceOnUse" x1="350.3" y1="133.1" x2="343.8" y2="121.8"><stop offset="0%" stop-color="#fbbc3a"/><stop offset="100%" stop-color="#faad38"/></linearGradient><linearGradient id="q96" gradientUnits="userSpaceOnUse" x1="341.3" y1="124.7" x2="323.2" y2="121.5"><stop offset="0%" stop-color="#faad38"/><stop offset="100%" stop-color="#f99e36"/></linearGradient><linearGradient id="q97" gradientUnits="userSpaceOnUse" x1="399.2" y1="153.4" x2="395.3" y2="158.1"><stop offset="0%" stop-color="#bebb2f"/><stop offset="40%" stop-color="#cabc31"/><stop offset="100%" stop-color="#cfb533"/></linearGradient><linearGradient id="q98" gradientUnits="userSpaceOnUse" x1="422.6" y1="172.3" x2="422.2" y2="172.7"><stop offset="0%" stop-color="#456c20"/><stop offset="20%" stop-color="#52731f"/><stop offset="80%" stop-color="#7e8420"/><stop offset="100%" stop-color="#878522"/></linearGradient><linearGradient id="q99" gradientUnits="userSpaceOnUse" x1="339.1" y1="137.6" x2="329.5" y2="122.8"><stop offset="0%" stop-color="#fbbc3a"/><stop offset="100%" stop-color="#f99e36"/></linearGradient><linearGradient id="q100" gradientUnits="userSpaceOnUse" x1="381.6" y1="155.2" x2="376.4" y2="144.3"><stop offset="0%" stop-color="#fbdb3e"/><stop offset="33.3%" stop-color="#fdd83e"/><stop offset="100%" stop-color="#fccf3d"/></linearGradient><linearGradient id="q101" gradientUnits="userSpaceOnUse" x1="406.5" y1="159.6" x2="402.5" y2="164.3"><stop offset="0%" stop-color="#bebb2f"/><stop offset="40%" stop-color="#cabc31"/><stop offset="100%" stop-color="#cfb533"/></linearGradient><linearGradient id="q102" gradientUnits="userSpaceOnUse" x1="326.6" y1="143.3" x2="318.9" y2="127.2"><stop offset="0%" stop-color="#fbbc3a"/><stop offset="85.7%" stop-color="#f99e36"/><stop offset="100%" stop-color="#f99936"/></linearGradient><linearGradient id="q103" gradientUnits="userSpaceOnUse" x1="370" y1="160.8" x2="364.7" y2="149.7"><stop offset="0%" stop-color="#fbdb3e"/><stop offset="33.3%" stop-color="#fdd83e"/><stop offset="100%" stop-color="#fccf3d"/></linearGradient><linearGradient id="q104" gradientUnits="userSpaceOnUse" x1="414.1" y1="165.9" x2="410" y2="170.7"><stop offset="0%" stop-color="#bebb2f"/><stop offset="40%" stop-color="#cabc31"/><stop offset="100%" stop-color="#cfb533"/></linearGradient><linearGradient id="q105" gradientUnits="userSpaceOnUse" x1="357.9" y1="166.6" x2="352.6" y2="155.3"><stop offset="0%" stop-color="#fbdb3e"/><stop offset="33.3%" stop-color="#fdd83e"/><stop offset="100%" stop-color="#fccf3d"/></linearGradient><linearGradient id="q106" gradientUnits="userSpaceOnUse" x1="345.5" y1="172.6" x2="340.1" y2="161.1"><stop offset="0%" stop-color="#fbdb3e"/><stop offset="33.3%" stop-color="#fdd83e"/><stop offset="100%" stop-color="#fccf3d"/></linearGradient></defs>
<g stroke="#0a0800" stroke-width=".9" stroke-linejoin="round">
<polygon points="384.8,24.5 393.8,21.7 399.6,24.8 390.5,27.6" fill="#ee3e40"/>
<polygon points="390.5,27.6 399.6,24.8 405.4,30.6 396.3,33.5" fill="#ef423f"/>
<polygon points="375.5,27.3 384.8,24.5 390.5,27.6 381.1,30.5" fill="#ee3e40"/>
<polygon points="396.3,33.5 405.4,30.6 411,43.2 402,44.9" fill="url(#q1)"/>
<polygon points="402,44.9 411,43.2 416.9,51.9 407.9,53.8" fill="url(#q2)"/>
<polygon points="381.1,30.5 390.5,27.6 396.3,33.5 386.9,36.5" fill="#ef423f"/>
<polygon points="366,30.1 375.5,27.3 381.1,30.5 371.5,33.4" fill="#ee3e40"/>
<polygon points="386.9,36.5 396.3,33.5 402,44.9 392.7,48.1" fill="url(#q3)"/>
<polygon points="407.9,53.8 416.9,51.9 423.1,56.8 414.1,58.7" fill="#f67535"/>
<polygon points="392.7,48.1 402,44.9 407.9,53.8 398.5,58.4" fill="url(#q4)"/>
<polygon points="371.5,33.4 381.1,30.5 386.9,36.5 377.3,39.6" fill="#ef423f"/>
<polygon points="356.2,33.1 366,30.1 371.5,33.4 361.7,36.5" fill="#ee3e40"/>
<polygon points="414.1,58.7 423.1,56.8 429.4,61.8 420.3,65.2" fill="#f77b34"/>
<polygon points="377.3,39.6 386.9,36.5 392.7,48.1 383.1,51.3" fill="url(#q5)"/>
<polygon points="398.5,58.4 407.9,53.8 414.1,58.7 404.6,64.8" fill="url(#q6)"/>
<polygon points="383.1,51.3 392.7,48.1 398.5,58.4 388.9,67.1" fill="url(#q7)"/>
<polygon points="346.4,41.6 356.2,33.1 361.7,36.5 351.8,46.5" fill="url(#q8)"/>
<polygon points="361.7,36.5 371.5,33.4 377.3,39.6 367.4,45.5" fill="url(#q9)"/>
<polygon points="388.9,67.1 398.5,58.4 404.6,64.8 394.9,73.7" fill="url(#q10)"/>
<polygon points="336.4,48.9 346.4,41.6 351.8,46.5 341.7,53.9" fill="url(#q11)"/>
<polygon points="444.5,114.6 453.4,110.4 458.1,133.3 449.4,137.7" fill="url(#q12)"/>
<polygon points="449.4,137.7 458.1,133.3 465.1,138.2 456.4,142.7" fill="#3e9c3c"/>
<polygon points="420.3,65.2 429.4,61.8 435.6,70.9 426.5,74.5" fill="url(#q13)"/>
<polygon points="367.4,45.5 377.3,39.6 383.1,51.3 373.3,56" fill="url(#q14)"/>
<polygon points="404.6,64.8 414.1,58.7 420.3,65.2 410.9,70.1" fill="url(#q15)"/>
<polygon points="373.3,56 383.1,51.3 388.9,67.1 379.2,72" fill="url(#q16)"/>
<polygon points="351.8,46.5 361.7,36.5 367.4,45.5 357.5,55.6" fill="url(#q17)"/>
<polygon points="326.6,60.3 336.4,48.9 341.7,53.9 331.8,65.5" fill="url(#q18)"/>
<polygon points="316.6,70.5 326.6,60.3 331.8,65.5 321.8,77.1" fill="url(#q19)"/>
<polygon points="426.5,74.5 435.6,70.9 442,78.8 432.7,85.2" fill="url(#q20)"/>
<polygon points="379.2,72 388.9,67.1 394.9,73.7 385.1,80" fill="url(#q21)"/>
<polygon points="341.7,53.9 351.8,46.5 357.5,55.6 347.5,64.5" fill="url(#q22)"/>
<polygon points="357.5,55.6 367.4,45.5 373.3,56 363.4,67.6" fill="url(#q23)"/>
<polygon points="438.8,97.3 448,92.1 453.4,110.4 444.5,114.6" fill="url(#q24)"/>
<polygon points="394.9,73.7 404.6,64.8 410.9,70.1 401.1,80.4" fill="url(#q25)"/>
<polygon points="432.7,85.2 442,78.8 448,92.1 438.8,97.3" fill="url(#q26)"/>
<polygon points="363.4,67.6 373.3,56 379.2,72 369.3,79.6" fill="url(#q27)"/>
<polygon points="410.9,70.1 420.3,65.2 426.5,74.5 417,80.8" fill="url(#q28)"/>
<polygon points="306.1,76.8 316.6,70.5 321.8,77.1 311.3,83.5" fill="url(#q29)"/>
<polygon points="435.4,118.8 444.5,114.6 449.4,137.7 440.5,142.2" fill="url(#q30)"/>
<polygon points="331.8,65.5 341.7,53.9 347.5,64.5 337.5,76.2" fill="url(#q31)"/>
<polygon points="440.5,142.2 449.4,137.7 456.4,142.7 447.4,147.3" fill="#3e9c3c"/>
<polygon points="347.5,64.5 357.5,55.6 363.4,67.6 353.3,75.3" fill="url(#q32)"/>
<polygon points="456.4,142.7 465.1,138.2 472.4,143.2 463.6,147.8" fill="#3e9c3c"/>
<polygon points="369.3,79.6 379.2,72 385.1,80 375.2,89.1" fill="url(#q33)"/>
<polygon points="321.8,77.1 331.8,65.5 337.5,76.2 327.3,85.3" fill="url(#q34)"/>
<polygon points="417,80.8 426.5,74.5 432.7,85.2 423.1,93" fill="url(#q35)"/>
<polygon points="385.1,80 394.9,73.7 401.1,80.4 391.2,88.2" fill="url(#q36)"/>
<polygon points="353.3,75.3 363.4,67.6 369.3,79.6 359.2,86.1" fill="url(#q37)"/>
<polygon points="337.5,76.2 347.5,64.5 353.3,75.3 343.3,87" fill="url(#q38)"/>
<polygon points="401.1,80.4 410.9,70.1 417,80.8 407.3,88.6" fill="url(#q39)"/>
<polygon points="423.1,93 432.7,85.2 438.8,97.3 429.4,104" fill="url(#q40)"/>
<polygon points="429.4,104 438.8,97.3 444.5,114.6 435.4,118.8" fill="url(#q41)"/>
<polygon points="311.3,83.5 321.8,77.1 327.3,85.3 316.7,91.8" fill="url(#q42)"/>
<polygon points="295.4,83.1 306.1,76.8 311.3,83.5 300.3,88.7" fill="url(#q43)"/>
<polygon points="327.3,85.3 337.5,76.2 343.3,87 332.8,93.6" fill="url(#q44)"/>
<polygon points="375.2,89.1 385.1,80 391.2,88.2 381.2,97.5" fill="url(#q45)"/>
<polygon points="359.2,86.1 369.3,79.6 375.2,89.1 365,94.4" fill="url(#q46)"/>
<polygon points="343.3,87 353.3,75.3 359.2,86.1 348.8,92.7" fill="url(#q47)"/>
<polygon points="407.3,88.6 417,80.8 423.1,93 413.5,98.3" fill="url(#q48)"/>
<polygon points="426,123.2 435.4,118.8 440.5,142.2 431.3,146.8" fill="url(#q49)"/>
<polygon points="391.2,88.2 401.1,80.4 407.3,88.6 397.4,96.6" fill="url(#q50)"/>
<polygon points="431.3,146.8 440.5,142.2 447.4,147.3 438.2,152.1" fill="#3e9c3c"/>
<polygon points="447.4,147.3 456.4,142.7 463.6,147.8 454.6,152.6" fill="#3e9c3c"/>
<polygon points="463.6,147.8 472.4,143.2 479.8,148.3 471,153.1" fill="#3e9c3c"/>
<polygon points="413.5,98.3 423.1,93 429.4,104 419.7,112" fill="url(#q51)"/>
<polygon points="316.7,91.8 327.3,85.3 332.8,93.6 322,97.6" fill="url(#q52)"/>
<polygon points="419.7,112 429.4,104 435.4,118.8 426,123.2" fill="url(#q53)"/>
<polygon points="284.5,89.7 295.4,83.1 300.3,88.7 289.2,94.1" fill="#f9a437"/>
<polygon points="365,94.4 375.2,89.1 381.2,97.5 371,101.6" fill="url(#q54)"/>
<polygon points="300.3,88.7 311.3,83.5 316.7,91.8 305.6,95.8" fill="url(#q55)"/>
<polygon points="381.2,97.5 391.2,88.2 397.4,96.6 387.3,104.6" fill="url(#q56)"/>
<polygon points="332.8,93.6 343.3,87 348.8,92.7 338.1,96.7" fill="#f8ab37"/>
<polygon points="397.4,96.6 407.3,88.6 413.5,98.3 403.7,105.1" fill="url(#q57)"/>
<polygon points="348.8,92.7 359.2,86.1 365,94.4 354.5,97.1" fill="url(#q58)"/>
<polygon points="416.3,127.7 426,123.2 431.3,146.8 421.9,151.6" fill="url(#q59)"/>
<polygon points="421.9,151.6 431.3,146.8 438.2,152.1 428.7,157" fill="#3e9c3c"/>
<polygon points="403.7,105.1 413.5,98.3 419.7,112 409.9,116.3" fill="url(#q60)"/>
<polygon points="438.2,152.1 447.4,147.3 454.6,152.6 445.3,157.5" fill="#3e9c3c"/>
<polygon points="454.6,152.6 463.6,147.8 471,153.1 462,158.1" fill="#3e9c3c"/>
<polygon points="371,101.6 381.2,97.5 387.3,104.6 377.1,108.9" fill="#fbc13b"/>
<polygon points="471,153.1 479.8,148.3 487.5,153.6 478.7,158.6" fill="#3e9c3c"/>
<polygon points="387.3,104.6 397.4,96.6 403.7,105.1 393.6,109.3" fill="url(#q61)"/>
<polygon points="409.9,116.3 419.7,112 426,123.2 416.3,127.7" fill="url(#q62)"/>
<polygon points="305.6,95.8 316.7,91.8 322,97.6 310.6,100.4" fill="#faae38"/>
<polygon points="289.2,94.1 300.3,88.7 305.6,95.8 294.1,100" fill="#faa938"/>
<polygon points="322,97.6 332.8,93.6 338.1,96.7 327.1,100.8" fill="#d69630"/>
<polygon points="354.5,97.1 365,94.4 371,101.6 360.4,103.1" fill="url(#q63)"/>
<polygon points="338.1,96.7 348.8,92.7 354.5,97.1 343.7,101.3" fill="#faad38"/>
<polygon points="270.9,81.4 284.5,89.7 289.2,94.1 276,88.6" fill="url(#q64)"/>
<polygon points="393.6,109.3 403.7,105.1 409.9,116.3 400,120.8" fill="url(#q65)"/>
<polygon points="412.1,156.5 421.9,151.6 428.7,157 418.9,162.1" fill="#3e9c3c"/>
<polygon points="406.4,131.1 416.3,127.7 421.9,151.6 412.1,156.5" fill="url(#q66)"/>
<polygon points="428.7,157 438.2,152.1 445.3,157.5 435.8,162.6" fill="#3e9c3c"/>
<polygon points="445.3,157.5 454.6,152.6 462,158.1 452.7,163.2" fill="#3e9c3c"/>
<polygon points="377.1,108.9 387.3,104.6 393.6,109.3 383.3,113.7" fill="#fcc53b"/>
<polygon points="462,158.1 471,153.1 478.7,158.6 469.6,163.7" fill="#3e9c3c"/>
<polygon points="400,120.8 409.9,116.3 416.3,127.7 406.4,131.1" fill="url(#q67)"/>
<polygon points="360.4,103.1 371,101.6 377.1,108.9 366.5,110.6" fill="url(#q68)"/>
<polygon points="294.1,100 305.6,95.8 310.6,100.4 299.1,104.7" fill="#faad38"/>
<polygon points="310.6,100.4 322,97.6 327.1,100.8 315.8,105.1" fill="#e8a234"/>
<polygon points="327.1,100.8 338.1,96.7 343.7,101.3 332.6,105.6" fill="#faad38"/>
<polygon points="343.7,101.3 354.5,97.1 360.4,103.1 349.5,106" fill="#faae38"/>
<polygon points="276,88.6 289.2,94.1 294.1,100 281.3,97.4" fill="url(#q69)"/>
<polygon points="383.3,113.7 393.6,109.3 400,120.8 389.7,125.3" fill="url(#q70)"/>
<polygon points="418.9,162.1 428.7,157 435.8,162.6 426,167.8" fill="#3e9c3c"/>
<polygon points="435.8,162.6 445.3,157.5 452.7,163.2 443.1,168.4" fill="#3e9c3c"/>
<polygon points="396.2,134.5 406.4,131.1 412.1,156.5 402.4,155.3" fill="url(#q71)"/>
<polygon points="366.5,110.6 377.1,108.9 383.3,113.7 372.7,118.2" fill="#fcc33b"/>
<polygon points="452.7,163.2 462,158.1 469.6,163.7 460.3,169" fill="#3e9c3c"/>
<polygon points="402.4,155.3 412.1,156.5 418.9,162.1 409.2,161" fill="url(#q72)"/>
<polygon points="389.7,125.3 400,120.8 406.4,131.1 396.2,134.5" fill="url(#q73)"/>
<polygon points="299.1,104.7 310.6,100.4 315.8,105.1 304.2,109.5" fill="#faad38"/>
<polygon points="281.3,97.4 294.1,100 299.1,104.7 287.2,109.1" fill="url(#q74)"/>
<polygon points="315.8,105.1 327.1,100.8 332.6,105.6 321.1,108.6" fill="#e89f34"/>
<polygon points="349.5,106 360.4,103.1 366.5,110.6 355.4,110.9" fill="url(#q75)"/>
<polygon points="332.6,105.6 343.7,101.3 349.5,106 338.3,110.5" fill="#faad38"/>
<polygon points="372.7,118.2 383.3,113.7 389.7,125.3 379.1,128.7" fill="url(#q76)"/>
<polygon points="426,167.8 435.8,162.6 443.1,168.4 433.2,173.8" fill="#3e9c3c"/>
<polygon points="443.1,168.4 452.7,163.2 460.3,169 450.6,174.4" fill="#3e9c3c"/>
<polygon points="409.2,161 418.9,162.1 426,167.8 416.2,166.9" fill="url(#q77)"/>
<polygon points="355.4,110.9 366.5,110.6 372.7,118.2 361.7,120.1" fill="url(#q78)"/>
<polygon points="287.2,109.1 299.1,104.7 304.2,109.5 292,112.7" fill="#e89f34"/>
<polygon points="379.1,128.7 389.7,125.3 396.2,134.5 385.6,136.7" fill="url(#q79)"/>
<polygon points="304.2,109.5 315.8,105.1 321.1,108.6 309.1,111.8" fill="#c2832b"/>
<polygon points="321.1,108.6 332.6,105.6 338.3,110.5 326.5,112.3" fill="#e39a33"/>
<polygon points="338.3,110.5 349.5,106 355.4,110.9 344.1,114.1" fill="#e89f34"/>
<polygon points="385.6,136.7 396.2,134.5 402.4,155.3 392.3,143.6" fill="url(#q80)"/>
<polygon points="361.7,120.1 372.7,118.2 379.1,128.7 368.1,128.2" fill="url(#q81)"/>
<polygon points="433.2,173.8 443.1,168.4 450.6,174.4 440.7,179.9" fill="#3e9c3c"/>
<polygon points="392.3,143.6 402.4,155.3 409.2,161 399.1,153.4" fill="url(#q82)"/>
<polygon points="416.2,166.9 426,167.8 433.2,173.8 423.5,173" fill="url(#q83)"/>
<polygon points="344.1,114.1 355.4,110.9 361.7,120.1 350.3,122.1" fill="url(#q84)"/>
<polygon points="292,112.7 304.2,109.5 309.1,111.8 296.8,115" fill="url(#q85)"/>
<polygon points="309.1,111.8 321.1,108.6 326.5,112.3 314.6,116.9" fill="#e79833"/>
<polygon points="326.5,112.3 338.3,110.5 344.1,114.1 332.3,117.4" fill="#e39832"/>
<polygon points="368.1,128.2 379.1,128.7 385.6,136.7 374.6,135" fill="url(#q86)"/>
<polygon points="399.1,153.4 409.2,161 416.2,166.9 406.3,159.4" fill="url(#q87)"/>
<polygon points="350.3,122.1 361.7,120.1 368.1,128.2 356.6,130.3" fill="url(#q88)"/>
<polygon points="423.5,173 433.2,173.8 440.7,179.9 431,179.3" fill="url(#q89)"/>
<polygon points="374.6,135 385.6,136.7 392.3,143.6 381.3,142.1" fill="url(#q90)"/>
<polygon points="332.3,117.4 344.1,114.1 350.3,122.1 338.5,125.6" fill="url(#q91)"/>
<polygon points="296.8,115 309.1,111.8 314.6,116.9 301.9,118.9" fill="#e39131"/>
<polygon points="314.6,116.9 326.5,112.3 332.3,117.4 320.1,120.9" fill="#e79633"/>
<polygon points="356.6,130.3 368.1,128.2 374.6,135 363.2,138.7" fill="url(#q92)"/>
<polygon points="406.3,159.4 416.2,166.9 423.5,173 413.7,165.6" fill="url(#q93)"/>
<polygon points="381.3,142.1 392.3,143.6 399.1,153.4 388.2,152.1" fill="url(#q94)"/>
<polygon points="338.5,125.6 350.3,122.1 356.6,130.3 344.9,135.4" fill="url(#q95)"/>
<polygon points="320.1,120.9 332.3,117.4 338.5,125.6 326,126.4" fill="url(#q96)"/>
<polygon points="301.9,118.9 314.6,116.9 320.1,120.9 307.5,124.4" fill="#e38f31"/>
<polygon points="363.2,138.7 374.6,135 381.3,142.1 369.8,147.4" fill="#fccb3c"/>
<polygon points="344.9,135.4 356.6,130.3 363.2,138.7 351.3,144" fill="#fbc13b"/>
<polygon points="388.2,152.1 399.1,153.4 406.3,159.4 395.4,158.2" fill="url(#q97)"/>
<polygon points="413.7,165.6 423.5,173 431,179.3 421.3,172" fill="url(#q98)"/>
<polygon points="326,126.4 338.5,125.6 344.9,135.4 332.7,140.7" fill="url(#q99)"/>
<polygon points="369.8,147.4 381.3,142.1 388.2,152.1 376.7,157.6" fill="url(#q100)"/>
<polygon points="351.3,144 363.2,138.7 369.8,147.4 358,152.9" fill="#fcca3c"/>
<polygon points="307.5,124.4 320.1,120.9 326,126.4 313.2,130.1" fill="#f79a35"/>
<polygon points="332.7,140.7 344.9,135.4 351.3,144 339.1,149.5" fill="#fbc13b"/>
<polygon points="395.4,158.2 406.3,159.4 413.7,165.6 402.7,164.6" fill="url(#q101)"/>
<polygon points="376.7,157.6 388.2,152.1 395.4,158.2 383.8,163.9" fill="#fbdb3e"/>
<polygon points="313.2,130.1 326,126.4 332.7,140.7 320.2,146.1" fill="url(#q102)"/>
<polygon points="358,152.9 369.8,147.4 376.7,157.6 364.8,163.3" fill="url(#q103)"/>
<polygon points="339.1,149.5 351.3,144 358,152.9 345.7,158.5" fill="#fcca3c"/>
<polygon points="320.2,146.1 332.7,140.7 339.1,149.5 326.5,155.1" fill="#fbc13b"/>
<polygon points="402.7,164.6 413.7,165.6 421.3,172 410.4,171.1" fill="url(#q104)"/>
<polygon points="364.8,163.3 376.7,157.6 383.8,163.9 371.8,169.9" fill="#fbdb3e"/>
<polygon points="383.8,163.9 395.4,158.2 402.7,164.6 391.1,170.5" fill="#fbdb3e"/>
<polygon points="345.7,158.5 358,152.9 364.8,163.3 352.6,169.2" fill="url(#q105)"/>
<polygon points="326.5,155.1 339.1,149.5 345.7,158.5 333.1,164.4" fill="#fcca3c"/>
<polygon points="352.6,169.2 364.8,163.3 371.8,169.9 359.4,176" fill="#fbdb3e"/>
<polygon points="371.8,169.9 383.8,163.9 391.1,170.5 379,176.7" fill="#fbdb3e"/>
<polygon points="333.1,164.4 345.7,158.5 352.6,169.2 339.9,175.3" fill="url(#q106)"/>
<polygon points="391.1,170.5 402.7,164.6 410.4,171.1 398.6,177.3" fill="#fbdb3e"/>
<polygon points="339.9,175.3 352.6,169.2 359.4,176 346.6,182.3" fill="#fbdb3e"/>
<polygon points="359.4,176 371.8,169.9 379,176.7 366.5,183" fill="#fbdb3e"/>
<polygon points="379,176.7 391.1,170.5 398.6,177.3 386.5,183.7" fill="#fbdb3e"/>
<polygon points="346.6,182.3 359.4,176 366.5,183 353.6,189.6" fill="#fbdb3e"/>
<polygon points="366.5,183 379,176.7 386.5,183.7 373.9,190.3" fill="#fbdb3e"/>
<polygon points="353.6,189.6 366.5,183 373.9,190.3 360.8,197.2" fill="#fbdb3e"/>
</g><g stroke="#222" stroke-width="1" fill="none">
<path d="M258.2 58.9L271.8 138.5L364.0 243.5"/>
<path d="M370.0 231.0L494.6 160.5"/>
<path d="M255.7 59.3h3"/>
<path d="M258.0 72.6h3"/>
<path d="M260.2 85.8h3"/>
<path d="M262.5 99.1h3"/>
<path d="M264.8 112.4h3"/>
<path d="M267.0 125.6h3"/>
<path d="M269.3 138.9h3"/>
<path d="M276.7 146.5l3 -2.600"/>
<path d="M286.2 158.1l3 -2.600"/>
<path d="M295.8 168.4l3 -2.600"/>
<path d="M305.6 180.8l3 -2.600"/>
<path d="M316.4 193.1l3 -2.600"/>
<path d="M328.3 206.6l3 -2.600"/>
<path d="M341.8 221.6l3 -2.600"/>
<path d="M479.6 165.8l2.400 3.200"/>
<path d="M461.6 177.0l2.400 3.200"/>
<path d="M443.0 187.8l2.400 3.200"/>
<path d="M421.9 200.2l2.400 3.200"/>
<path d="M399.7 212.9l2.400 3.200"/>
</g>
<g font-family="Liberation Sans,sans-serif" font-size="12" fill="#000">
<text x="245.0" y="67.8" text-anchor="middle" >80</text>
<text x="226.4" y="88.7" text-anchor="middle" >70</text>
<text x="251.0" y="95.9" text-anchor="middle" >60</text>
<text x="233.3" y="116.6" text-anchor="middle" >50</text>
<text x="256.3" y="122.6" text-anchor="middle" >40</text>
<text x="239.9" y="142.6" text-anchor="middle" >30</text>
<text x="260.8" y="146.5" text-anchor="middle" >20</text>
<text x="256.3" y="151.6" text-anchor="middle" >4200</text>
<text x="231.8" y="176.4" text-anchor="middle" >3500</text>
<text x="273.4" y="175.0" text-anchor="middle" >2500</text>
<text x="247.4" y="202.5" text-anchor="middle" >2100</text>
<text x="291.7" y="198.9" text-anchor="middle" >1700</text>
<text x="314.7" y="226.4" text-anchor="middle" >1000</text>
<text x="504.2" y="176.7" text-anchor="middle" >45,00</text>
<text x="467.4" y="199.5" text-anchor="middle" >34,00</text>
<text x="515.3" y="209.7" text-anchor="middle" >38,00</text>
<text x="427.0" y="225.8" text-anchor="middle" >15,00</text>
<text x="218.3" y="118.3" text-anchor="middle" transform="rotate(77.6 218.3 118.3)" dy="4">Duty cycle %</text>
<text x="202.4" y="176.6" transform="rotate(54 202.4 176.6)" dy="4">Engine speed (rpm)</text>
</g>
<g font-family="Liberation Sans,sans-serif" font-size="12.100" font-weight="bold" fill="#8c8c90" fill-opacity=".5" text-anchor="middle">
<text x="379" y="94.9">Nevron Chart for .NET 2009 Volume 1</text>
<text x="379" y="108.4">Evaluation Mode - for testing purposes only</text>
<text x="379" y="121.9">Copyright Nevron Software 1998 - 2009</text>
<text x="379" y="135.9">Using functionality from Enterprise edition</text>
</g>
<text x="379.5" y="24.5" text-anchor="middle" font-family="Liberation Serif,serif" font-style="italic" font-size="24.300" fill="#cfd6df" dx=".8" dy=".8">N75 duty cycle [codeblock 2, manual]</text>
<text x="379" y="24.5" text-anchor="middle" font-family="Liberation Serif,serif" font-style="italic" font-size="24.300" fill="#4a698f">N75 duty cycle [codeblock 2, manual]</text>
</svg></div>
<div class="btn" style="left:796px;top:461px;width:23px;height:23px"><svg style="left:0;top:0" width="22" height="22" viewBox="0 0 23 23"><circle cx="13.500" cy="8.500" r="5" fill="#eaf3ff" stroke="#8fa9d0" stroke-width="1.200"/><path d="M9.500 12.500L4 18.500" stroke="#e08a1e" stroke-width="2.200" stroke-linecap="round"/><path d="M11 8.500h5M13.500 6v5" stroke="#e01c24" stroke-width="1.600"/></svg></div>
<div class="btn" style="left:796px;top:490px;width:23px;height:23px"><svg style="left:0;top:0" width="22" height="22" viewBox="0 0 23 23"><circle cx="13.500" cy="8.500" r="5" fill="#eaf3ff" stroke="#8fa9d0" stroke-width="1.200"/><path d="M9.500 12.500L4 18.500" stroke="#e08a1e" stroke-width="2.200" stroke-linecap="round"/><path d="M11 8.500h5" stroke="#e01c24" stroke-width="1.600"/></svg></div>
<div class="btn" style="left:796px;top:518px;width:23px;height:23px"><svg style="left:0;top:0" width="22" height="22" viewBox="0 0 23 23"><path d="M10 8v11H4z" fill="#4f86d6"/><path d="M11.500 13v6H19z" fill="#bcd6f7" stroke="#8fb3e6" stroke-width=".6"/><path d="M10 9c1-4 6-5 9-1l1.500 3-5 .5 1.500-2c-2-1.500-4-1-5 1z" fill="#58b04a"/></svg></div>
<div class="btn" style="left:796px;top:547px;width:23px;height:23px"><svg style="left:0;top:0" width="22" height="22" viewBox="0 0 23 23"><path d="M13 8v11h6z" fill="#4f86d6"/><path d="M11.500 13v6H4z" fill="#bcd6f7" stroke="#8fb3e6" stroke-width=".6"/><path d="M13 9c-1-4-6-5-9-1L2.500 11l5 .5L6 9.500c2-1.500 4-1 5 1z" fill="#58b04a"/></svg></div>
<div class="btn" style="left:7px;top:696px;width:92px;height:23px;line-height:22px">Undo changes</div>
<div class="btn" style="left:579px;top:696px;width:89px;height:23px;line-height:22px">Read</div>
<div class="btn" style="left:675px;top:696px;width:74px;height:23px;line-height:22px">Save</div>
<div class="btn" style="left:756px;top:696px;width:75px;height:23px;line-height:22px">Close</div>
</div>
<div id="task">
 <div style="left:225px;top:0;width:870px;height:29px;overflow:hidden"><div style="left:10px;top:-6px;width:845px;height:30px;background:linear-gradient(#cbd1db,#cfd5df 22%,#dae0e9 40%,#dfe5ed 58%,#cdd3dc 68%,#3e4248 86%,#0a0b0c);filter:blur(2.5px)"></div></div>
 <!-- start orb -->
 <svg style="left:8px;top:-6px" width="38" height="38" viewBox="0 0 38 38"><defs><radialGradient id="orb" cx=".5" cy=".85" r=".9"><stop offset="0" stop-color="#5fd0ff"/><stop offset=".35" stop-color="#2a7fc9"/><stop offset=".75" stop-color="#1a4f8c"/><stop offset="1" stop-color="#163a66"/></radialGradient><linearGradient id="orbh" x1="0" y1="0" x2="0" y2="1"><stop offset="0" stop-color="#fff" stop-opacity=".75"/><stop offset="1" stop-color="#fff" stop-opacity=".1"/></linearGradient></defs><circle cx="19" cy="19" r="18.500" fill="url(#orb)" stroke="#8fb4d8" stroke-width="1"/><path d="M3 15a16.500 16.500 0 0 1 32 0c-8 5-24 5-32 0z" fill="url(#orbh)"/><path d="M10.500 12c2.500-1.500 5-1.500 7.500 0l-1.600 6c-2.500-1.500-5-1.500-7.500 0z" fill="#f2632a"/><path d="M19.500 12.600c2.500 1.500 5 1.500 7.500 0l-1.600 6c-2.500 1.500-5 1.500-7.500 0z" fill="#8cc63f"/><path d="M8.600 19.600c2.500-1.500 5-1.500 7.500 0l-1.600 6c-2.500-1.500-5-1.500-7.500 0z" fill="#2ea3e6"/><path d="M17.600 20.200c2.500 1.500 5 1.500 7.500 0l-1.600 6c-2.500 1.500-5 1.500-7.500 0z" fill="#fbb91f"/></svg>
 <!-- explorer -->
 <svg style="left:73px;top:7px" width="17" height="16" viewBox="0 0 17 16"><path d="M.5 2.500h6l1.500 2h8.500v10H.5z" fill="#f7d774" stroke="#d8b140" stroke-width=".8"/><rect x="1.500" y="5" width="14" height="9" fill="#fbe9a4"/><path d="M3 9h11v6h-3v-3H6v3H3z" fill="#3f97e6"/><rect x="2.500" y="1.500" width="3" height="1.500" fill="#5cc04a"/></svg>
 <!-- chrome button -->
 <div style="left:106px;top:0;width:42px;height:28px;border:1px solid #6e7379;border-radius:2px;background:linear-gradient(135deg,#2c3034,#15181a 60%,#0b0d0e)"></div>
 <svg style="left:119px;top:6px" width="16" height="16" viewBox="0 0 48 48"><circle cx="24" cy="24" r="23" fill="#2fa84f"/><path d="M24 24L4 12.500A23 23 0 0 1 44 12.500z" fill="#dd4b3e"/><path d="M24 24l20-11.500A23 23 0 0 1 24 47z" fill="#f7c52d"/><circle cx="24" cy="24" r="10.500" fill="#fff"/><circle cx="24" cy="24" r="8" fill="#3b7ded"/></svg>
 <!-- edcsuite button (active) -->
 <div style="left:190px;top:0;width:4px;height:28px;border:1px solid #9a9ea3;border-left:none;background:#55595e"></div>
 <div style="left:152px;top:0;width:38px;height:28px;border:1px solid #b9bcc0;border-radius:2px;background:linear-gradient(135deg,#9a9da1,#6b6f74 55%,#4a4e53)"></div>
 <svg style="left:162px;top:5px" width="17" height="17" viewBox="0 0 48 48"><circle cx="24" cy="24" r="23.500" fill="#f7c531"/><path d="M7 20l9-8 5 4h6l5-4 9 8-4 14-6 2v5H17v-5l-6-2z" fill="#1d1d2b" stroke="#fff" stroke-width="2.500"/><circle cx="19" cy="25" r="3.200" fill="#fff"/><circle cx="30" cy="24" r="2.600" fill="#fff"/><circle cx="24" cy="34" r="5.500" fill="#f7c531" stroke="#1d1d2b" stroke-width="1"/></svg>
 <!-- tray -->
 <div style="left:1110px;top:5px;color:#fff;font-size:12px;line-height:14px;letter-spacing:-.3px">EN</div>
 <svg style="left:1133px;top:4px" width="16" height="14" viewBox="0 0 16 14"><path d="M4 4c2-3 5 0 8-3" stroke="#d8d8d8" stroke-width="1" fill="none"/><rect x=".5" y="4.500" width="14" height="8" rx="1" fill="#d9d9d9" stroke="#8d8d8d"/><path d="M2.500 7h10M2.500 9h10M4 11h7" stroke="#555" stroke-width="1" stroke-dasharray="1.500 1"/></svg>
 <svg style="left:1161px;top:12px" width="8" height="5" viewBox="0 0 8 5"><path d="M0 5L4 0l4 5z" fill="#fff"/></svg>
 <svg style="left:1181px;top:6px" width="18" height="18" viewBox="0 0 18 18"><path d="M2.500 1v15" stroke="#fff" stroke-width="1.400"/><path d="M3.500 2c3-1.500 5 1.500 9 0v7c-4 1.500-6-1.500-9 0z" fill="#fff"/><circle cx="11.500" cy="12" r="4.500" fill="#e0202a"/><path d="M9.500 10l4 4M13.500 10l-4 4" stroke="#fff" stroke-width="1.400"/></svg>
 <svg style="left:1205px;top:5px" width="18" height="18" viewBox="0 0 18 18"><rect x="2.500" y="3.500" width="6" height="12" rx="1" fill="none" stroke="#bbb" stroke-width="1"/><path d="M9 2v4M13 2v4" stroke="#fff" stroke-width="1.400"/><path d="M7 6h8v3c0 2-2 3-3 3v4h-2v-4c-1 0-3-1-3-3z" fill="#fff"/><path d="M2 10l6 6M8 10l-6 6" stroke="#e0202a" stroke-width="1.800"/></svg>
 <svg style="left:1230px;top:9px" width="16" height="12" viewBox="0 0 16 13"><g fill="#fff"><rect x="0" y="10" width="2" height="2"/><rect x="3" y="8" width="2" height="4"/><rect x="6" y="6" width="2" height="6"/><rect x="9" y="3" width="2.500" height="9"/><rect x="12.500" y="0" width="2.500" height="12"/></g></svg>
 <svg style="left:1253px;top:6px" width="16" height="16" viewBox="0 0 16 16"><path d="M1 5.500h3l4-4v13l-4-4H1z" fill="#fff" stroke="#ccc" stroke-width=".6"/><path d="M10 5c1.500 1.500 1.500 4.500 0 6M12 3c2.500 2.500 2.500 7.500 0 10" stroke="#fff" stroke-width="1.200" fill="none"/></svg>
 <div style="left:1296px;top:8px;width:34px;color:#fff;font-size:12px;line-height:14px;letter-spacing:-.3px;text-align:center">00:10</div>
 <div style="left:1352px;top:0;width:14px;height:29px;border-left:1px solid #555a60;background:linear-gradient(90deg,#2a2d30,#0c0d0e);box-shadow:inset 1px 0 0 #15171a"></div>
</div>
</body></html>
